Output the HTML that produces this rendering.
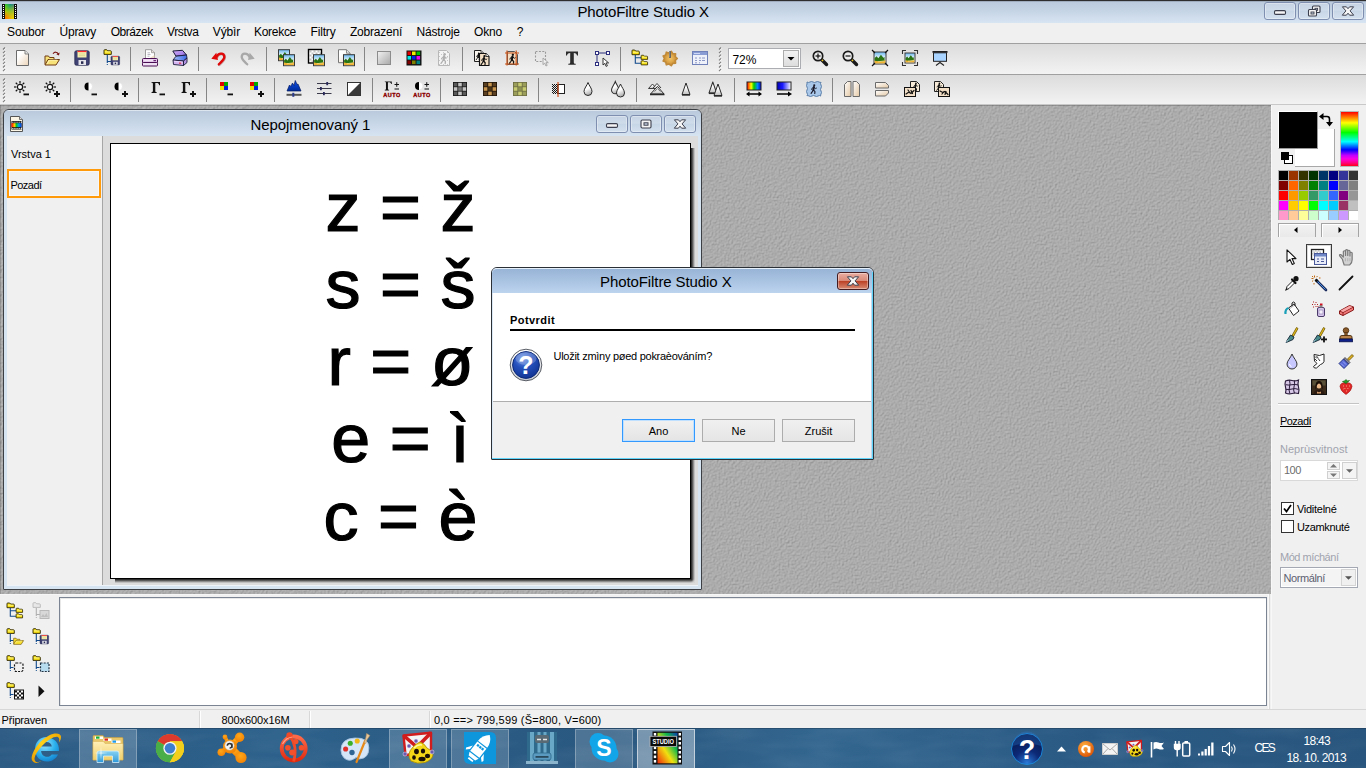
<!DOCTYPE html><html><head><meta charset="utf-8"><title>PhotoFiltre Studio X</title><style>
html,body{margin:0;padding:0}
body{width:1366px;height:768px;position:relative;overflow:hidden;background:#f0f0f0;font-family:"Liberation Sans",sans-serif;font-size:11px;color:#000}
div{position:absolute;box-sizing:border-box}
svg{position:absolute;overflow:visible}
.t{white-space:pre;line-height:1;}
.cap{border:1px solid #7f8fb0;border-radius:3px;background:linear-gradient(#c5d3e3,#cfdcea 45%,#c7d6e6 50%,#d3e0ee);box-shadow:inset 0 0 0 1px rgba(255,255,255,.35)}
.sep{width:1px;height:25px;background:#8a8a8a}
.btn{border:1px solid #acacac;background:linear-gradient(#f0f0f0,#e5e5e5);text-align:center;font-size:11px;line-height:22px}
</style></head><body>
<svg width="0" height="0" style="position:absolute"><defs>
<filter id="tex" x="0" y="0" width="100%" height="100%" color-interpolation-filters="sRGB"><feTurbulence type="fractalNoise" baseFrequency="0.55 0.55" numOctaves="2" seed="3" result="n"/><feDiffuseLighting in="n" surfaceScale="1.1" lighting-color="#fff" diffuseConstant="1"><feDistantLight azimuth="225" elevation="50"/></feDiffuseLighting><feColorMatrix type="matrix" values="0.25 0 0 0 0.483  0.25 0 0 0 0.483  0.25 0 0 0 0.483  0 0 0 1 0"/></filter>
<filter id="water" x="0" y="0" width="100%" height="100%"><feTurbulence type="fractalNoise" baseFrequency="0.012 0.05" numOctaves="3" seed="8"/><feColorMatrix type="matrix" values="0 0 0 0 1  0 0 0 0 1  0 0 0 0 1  0.9 0 0 0 -0.33"/></filter>
</defs></svg>
<div style="left:0px;top:0px;width:1366px;height:23px;background:linear-gradient(#b9c9db,#c3d2e3 40%,#d7e4f2)"></div>
<div style="left:0px;top:0px;width:1366px;height:1px;background:#2e2e2e"></div>
<div style="left:0px;top:1px;width:1366px;height:1px;background:#6c7886;opacity:.35"></div>
<div class="t" style="left:577.4px;top:4px;font-size:15px;color:#000;letter-spacing:-0.09px;">PhotoFiltre Studio X</div>
<div class="cap" style="left:1264px;top:2px;width:32px;height:18px;"><svg style="left:0;top:0" width="30" height="16" viewBox="0 0 30 16"><rect x="9.5" y="7.6" width="11" height="3.8" rx="1.2" fill="#f4f4f4" stroke="#3c3f4d" stroke-width="1.1"/></svg></div>
<div class="cap" style="left:1298px;top:2px;width:32px;height:18px;"><svg style="left:0;top:0" width="30" height="16" viewBox="0 0 30 16"><rect x="13.5" y="3" width="7.5" height="6.5" rx="1" fill="#f4f4f4" stroke="#3c3f4d" stroke-width="1.1"/><rect x="16.0" y="5.3" width="2.6" height="2" fill="#c9d6e6" stroke="#3c3f4d" stroke-width=".9"/><rect x="9.5" y="6.5" width="8" height="6.5" rx="1" fill="#f4f4f4" stroke="#3c3f4d" stroke-width="1.1"/><rect x="12.0" y="9" width="3" height="2" fill="#c9d6e6" stroke="#3c3f4d" stroke-width=".9"/></svg></div>
<div class="cap" style="left:1332px;top:2px;width:32px;height:18px;"><svg style="left:0;top:0" width="30" height="16" viewBox="0 0 30 16"><path d="M9.4 3.8h4l1.6 1.9 1.6-1.9h4l-3.5 4.1 3.6 4.3h-4.100l-1.600-2-1.600 2h-4.100l3.600-4.300z" fill="#f6f6f6" stroke="#3c3f4d" stroke-width="1" stroke-linejoin="round"/></svg></div>
<svg style="left:2px;top:3px" width="16" height="16" viewBox="0 0 16 16"><defs><linearGradient id="apg" x1="0" y1="0" x2="0" y2="1"><stop offset="0" stop-color="#3fd01a"/><stop offset=".5" stop-color="#b9c80a"/><stop offset="1" stop-color="#ff5a00"/></linearGradient><linearGradient id="apb" x1="1" y1="0" x2=".2" y2=".7"><stop offset="0" stop-color="#0058b0"/><stop offset=".45" stop-color="#1a9a7a" stop-opacity=".7"/><stop offset="1" stop-color="#3fd01a" stop-opacity="0"/></linearGradient><linearGradient id="apy" x1="1" y1="1" x2=".3" y2=".4"><stop offset="0" stop-color="#f5d800"/><stop offset="1" stop-color="#f5d800" stop-opacity="0"/></linearGradient></defs><rect x="0" y="1" width="15" height="15" fill="#111"/><rect x="3" y="1" width="9" height="15" fill="url(#apg)"/><rect x="3" y="1" width="9" height="15" fill="url(#apb)"/><rect x="3" y="1" width="9" height="15" fill="url(#apy)"/><rect x="1" y="2" width="1" height="1" fill="#fff"/><rect x="13" y="2" width="1" height="1" fill="#fff"/><rect x="1" y="4" width="1" height="1" fill="#fff"/><rect x="13" y="4" width="1" height="1" fill="#fff"/><rect x="1" y="6" width="1" height="1" fill="#fff"/><rect x="13" y="6" width="1" height="1" fill="#fff"/><rect x="1" y="8" width="1" height="1" fill="#fff"/><rect x="13" y="8" width="1" height="1" fill="#fff"/><rect x="1" y="10" width="1" height="1" fill="#fff"/><rect x="13" y="10" width="1" height="1" fill="#fff"/><rect x="1" y="12" width="1" height="1" fill="#fff"/><rect x="13" y="12" width="1" height="1" fill="#fff"/><rect x="1" y="14" width="1" height="1" fill="#fff"/><rect x="13" y="14" width="1" height="1" fill="#fff"/></svg>
<div style="left:0px;top:23px;width:1366px;height:20px;background:#f0f0f0"></div>
<div class="t" style="left:7px;top:26px;font-size:12px;color:#000;letter-spacing:-0.117px;">Soubor</div>
<div class="t" style="left:59.6px;top:26px;font-size:12px;color:#000;letter-spacing:-0.269px;">Úpravy</div>
<div class="t" style="left:110.7px;top:26px;font-size:12px;color:#000;letter-spacing:-0.48px;">Obrázek</div>
<div class="t" style="left:167px;top:26px;font-size:12px;color:#000;letter-spacing:-0.344px;">Vrstva</div>
<div class="t" style="left:212.8px;top:26px;font-size:12px;color:#000;letter-spacing:-0.163px;">Výbìr</div>
<div class="t" style="left:254px;top:26px;font-size:12px;color:#000;letter-spacing:-0.29px;">Korekce</div>
<div class="t" style="left:310.5px;top:26px;font-size:12px;color:#000;letter-spacing:-0.167px;">Filtry</div>
<div class="t" style="left:350px;top:26px;font-size:12px;color:#000;letter-spacing:-0.226px;">Zobrazení</div>
<div class="t" style="left:416.6px;top:26px;font-size:12px;color:#000;letter-spacing:-0.198px;">Nástroje</div>
<div class="t" style="left:474px;top:26px;font-size:12px;color:#000;letter-spacing:-0.172px;">Okno</div>
<div class="t" style="left:516.8px;top:26px;font-size:12px;color:#000;">?</div>
<div style="left:0px;top:43px;width:1366px;height:1px;background:#a0a0a0"></div>
<div style="left:0px;top:44px;width:1366px;height:30px;background:linear-gradient(#dcdcdc,#f3f3f3)"></div>
<div style="left:0px;top:74px;width:1366px;height:1px;background:#a0a0a0"></div>
<div style="left:0px;top:75px;width:1366px;height:30px;background:linear-gradient(#dcdcdc,#f3f3f3)"></div>
<div style="left:0px;top:104px;width:1366px;height:1px;background:#c8c8c8"></div>
<svg style="left:3px;top:47px" width="3" height="25" viewBox="0 0 3 25"><path d="M0 2.5L2 0.5" stroke="#7a7a7a" stroke-width="1.1"/><path d="M1 3.2L3 1.2" stroke="#fff" stroke-width=".7"/><path d="M0 6.1L2 4.1" stroke="#7a7a7a" stroke-width="1.1"/><path d="M1 6.800000000000001L3 4.8" stroke="#fff" stroke-width=".7"/><path d="M0 9.7L2 7.7" stroke="#7a7a7a" stroke-width="1.1"/><path d="M1 10.4L3 8.4" stroke="#fff" stroke-width=".7"/><path d="M0 13.3L2 11.3" stroke="#7a7a7a" stroke-width="1.1"/><path d="M1 14.0L3 12.0" stroke="#fff" stroke-width=".7"/><path d="M0 16.9L2 14.9" stroke="#7a7a7a" stroke-width="1.1"/><path d="M1 17.6L3 15.6" stroke="#fff" stroke-width=".7"/><path d="M0 20.5L2 18.5" stroke="#7a7a7a" stroke-width="1.1"/><path d="M1 21.2L3 19.2" stroke="#fff" stroke-width=".7"/><path d="M0 24.1L2 22.1" stroke="#7a7a7a" stroke-width="1.1"/><path d="M1 24.8L3 22.8" stroke="#fff" stroke-width=".7"/></svg>
<svg style="left:3px;top:78px" width="3" height="25" viewBox="0 0 3 25"><path d="M0 2.5L2 0.5" stroke="#7a7a7a" stroke-width="1.1"/><path d="M1 3.2L3 1.2" stroke="#fff" stroke-width=".7"/><path d="M0 6.1L2 4.1" stroke="#7a7a7a" stroke-width="1.1"/><path d="M1 6.800000000000001L3 4.8" stroke="#fff" stroke-width=".7"/><path d="M0 9.7L2 7.7" stroke="#7a7a7a" stroke-width="1.1"/><path d="M1 10.4L3 8.4" stroke="#fff" stroke-width=".7"/><path d="M0 13.3L2 11.3" stroke="#7a7a7a" stroke-width="1.1"/><path d="M1 14.0L3 12.0" stroke="#fff" stroke-width=".7"/><path d="M0 16.9L2 14.9" stroke="#7a7a7a" stroke-width="1.1"/><path d="M1 17.6L3 15.6" stroke="#fff" stroke-width=".7"/><path d="M0 20.5L2 18.5" stroke="#7a7a7a" stroke-width="1.1"/><path d="M1 21.2L3 19.2" stroke="#fff" stroke-width=".7"/><path d="M0 24.1L2 22.1" stroke="#7a7a7a" stroke-width="1.1"/><path d="M1 24.8L3 22.8" stroke="#fff" stroke-width=".7"/></svg>
<svg style="left:719px;top:47px" width="3" height="25" viewBox="0 0 3 25"><path d="M0 2.5L2 0.5" stroke="#7a7a7a" stroke-width="1.1"/><path d="M1 3.2L3 1.2" stroke="#fff" stroke-width=".7"/><path d="M0 6.1L2 4.1" stroke="#7a7a7a" stroke-width="1.1"/><path d="M1 6.800000000000001L3 4.8" stroke="#fff" stroke-width=".7"/><path d="M0 9.7L2 7.7" stroke="#7a7a7a" stroke-width="1.1"/><path d="M1 10.4L3 8.4" stroke="#fff" stroke-width=".7"/><path d="M0 13.3L2 11.3" stroke="#7a7a7a" stroke-width="1.1"/><path d="M1 14.0L3 12.0" stroke="#fff" stroke-width=".7"/><path d="M0 16.9L2 14.9" stroke="#7a7a7a" stroke-width="1.1"/><path d="M1 17.6L3 15.6" stroke="#fff" stroke-width=".7"/><path d="M0 20.5L2 18.5" stroke="#7a7a7a" stroke-width="1.1"/><path d="M1 21.2L3 19.2" stroke="#fff" stroke-width=".7"/><path d="M0 24.1L2 22.1" stroke="#7a7a7a" stroke-width="1.1"/><path d="M1 24.8L3 22.8" stroke="#fff" stroke-width=".7"/></svg>
<svg style="left:14px;top:50px" width="16" height="16" viewBox="0 0 16 16"><defs><linearGradient id="g1" x1="0" y1="0" x2="1" y2="1"><stop offset="0.3" stop-color="#fff"/><stop offset="1" stop-color="#ecd4b8"/></linearGradient></defs><path d="M2.5 0.5h8.5l3.5 3.5v11.5h-12z" fill="url(#g1)" stroke="#6b6b6b" stroke-width="1"/><path d="M11.0 0.5v3.5h3.5" fill="#e8e8e8" stroke="#6b6b6b" stroke-width=".8"/></svg>
<svg style="left:44px;top:50px" width="16" height="16" viewBox="0 0 16 16"><g transform="translate(0 0.5) scale(1)"><path d="M1 14V5.5h3.5l1 1.5H10v2" fill="#f7e27a" stroke="#6e3b12" stroke-width="1" stroke-linejoin="round"/><path d="M1 14.5l3-5.5h11.5l-3.5 5.5z" fill="#f7e27a" stroke="#6e3b12" stroke-width="1" stroke-linejoin="round"/><path d="M3 13.5l2.3-3.8h8" fill="none" stroke="#fff6c0" stroke-width=".8"/></g><path d="M9 3.8c1.5-2.2 4.2-2.2 5.3.2" fill="none" stroke="#7a1414" stroke-width="1.1"/><path d="M15.6 2.5l-.6 3.1-2.6-1.3z" fill="#7a1414"/></svg>
<svg style="left:74px;top:50px" width="16" height="16" viewBox="0 0 16 16"><g transform="translate(0 0) scale(1)"><rect x=".8" y=".8" width="14.4" height="14.4" rx="1.5" fill="#3f4273" stroke="#2a2c50" stroke-width=".8"/><rect x="3.5" y="1" width="9" height="6.5" fill="#f4efb0"/><rect x="3.5" y=".8" width="9" height="1.3" fill="#ff2a2a"/><path d="M5 4h6M5 5.6h6" stroke="#d8d28a" stroke-width=".7"/><rect x="4.5" y="10" width="7.5" height="5" fill="#e4e4ea"/><rect x="7" y="11.3" width="2.4" height="2.6" fill="#26284d"/></g></svg>
<svg style="left:104px;top:50px" width="16" height="16" viewBox="0 0 16 16"><path d="M3.300 5v8M3.300 11.500H7" stroke="#114a8c" stroke-width="1.100" fill="none"/><rect x="2.800" y="14" width="1" height="1" fill="#114a8c"/><g transform="translate(-0.5 -0.8) scale(1)"><path d="M.5 5.200V1.300Q.5 .5 1.300 .5H3.200l1 1.100H7Q7.800 1.600 7.800 2.400V5.200z" fill="#f8e010" stroke="#2a2200" stroke-width=".9" stroke-linejoin="round"/><path d="M1.400 2.700H7" stroke="#fffcb0" stroke-width=".8"/></g><g transform="translate(6.5 5.8) scale(0.6)"><rect x=".8" y=".8" width="14.4" height="14.4" rx="1.5" fill="#3f4273" stroke="#2a2c50" stroke-width=".8"/><rect x="3.5" y="1" width="9" height="6.5" fill="#f4efb0"/><rect x="3.5" y=".8" width="9" height="1.3" fill="#ff2a2a"/><path d="M5 4h6M5 5.6h6" stroke="#d8d28a" stroke-width=".7"/><rect x="4.5" y="10" width="7.5" height="5" fill="#e4e4ea"/><rect x="7" y="11.3" width="2.4" height="2.6" fill="#26284d"/></g></svg>
<div style="left:130px;top:47px;width:1px;height:24px;background:#858585"></div>
<svg style="left:142px;top:50px" width="16" height="16" viewBox="0 0 16 16"><path d="M3.500 9V-.3h6l3 3V9z" fill="#fff" stroke="#888" stroke-width=".8"/><path d="M9.500 -.3v3h3" fill="#e8e0d8" stroke="#888" stroke-width=".7"/><path d="M5.500 2.800h2.500M5.500 4.500h3M5.500 6.200h2" stroke="#9a9aa8" stroke-width=".7"/><path d="M7 8.500L12.500 5v3.500z" fill="#e8d4b8" opacity=".8"/><rect x=".5" y="8.500" width="15" height="4.500" rx="1" fill="#e4c8ea" stroke="#4a0e52" stroke-width="1"/><rect x=".5" y="12.500" width="15" height="3.500" rx=".8" fill="#f0e0f4" stroke="#4a0e52" stroke-width="1"/><path d="M2 10.200h9" stroke="#fff" stroke-width=".9" opacity=".8"/><rect x="11.500" y="10" width="2.500" height="1.200" fill="#6a2a7a"/></svg>
<svg style="left:172px;top:50px" width="16" height="16" viewBox="0 0 16 16"><defs><linearGradient id="g2" x1="0" y1="0" x2="1" y2="1"><stop offset="0" stop-color="#d8b0f8"/><stop offset="1" stop-color="#8a68e0"/></linearGradient><linearGradient id="g3" x1="0" y1="0" x2="1" y2="0"><stop offset="0" stop-color="#a8c0f8"/><stop offset="1" stop-color="#3a68e8"/></linearGradient></defs><path d="M.8 1L10.500 .3 14.500 5 4 6.200z" fill="url(#g2)" stroke="#1a1a3a" stroke-width="1" stroke-linejoin="round"/><path d="M4 6.200L14.500 5 15 8 11.500 11 1 10z" fill="url(#g3)" stroke="#1a1a3a" stroke-width=".9" stroke-linejoin="round"/><path d="M1 10L11.500 11v4.500L1.500 14.500z" fill="#d4b4f0" stroke="#1a1a3a" stroke-width=".9" stroke-linejoin="round"/><path d="M11.500 11L15 8v4.500L11.500 15.500z" fill="#b090e0" stroke="#1a1a3a" stroke-width=".9" stroke-linejoin="round"/><rect x="7" y="12.400" width="2.200" height="1.200" fill="#e01020"/><path d="M2 11.300l8.500.9" stroke="#f0e0ff" stroke-width=".8"/></svg>
<div style="left:198px;top:47px;width:1px;height:24px;background:#858585"></div>
<svg style="left:210px;top:50px" width="16" height="16" viewBox="0 0 16 16"><path d="M6.500 6.800C8.500 2.300 14.300 2.600 14.300 7 14.300 9.500 11 12 8.800 14.300" fill="none" stroke="#7a0000" stroke-width="2.600" stroke-linecap="round" opacity=".35" transform="translate(.5 .5)"/><path d="M6.500 6.800C8.500 2.300 14.300 2.600 14.300 7 14.300 9.500 11 12 8.800 14.300" fill="none" stroke="#e00808" stroke-width="2.300" stroke-linecap="round"/><path d="M1.300 8.800L6.300 2.800 8 10z" fill="#e00808"/></svg>
<svg style="left:240px;top:50px" width="16" height="16" viewBox="0 0 16 16"><g transform="translate(16 0) scale(-1 1)"><path d="M6.500 6.800C8.500 2.300 14.300 2.600 14.300 7 14.300 9.500 11 12 8.800 14.300" fill="none" stroke="#a8a8a8" stroke-width="2.300" stroke-linecap="round"/><path d="M1.300 8.800L6.300 2.800 8 10z" fill="#a8a8a8"/></g></svg>
<div style="left:266px;top:47px;width:1px;height:24px;background:#858585"></div>
<svg style="left:278px;top:50px" width="16" height="16" viewBox="0 0 16 16"><g transform="translate(0.5 -0.3)"><defs><linearGradient id="g4" x1="0" y1="0" x2="0" y2="1"><stop offset="0" stop-color="#6ab8f0"/><stop offset=".5" stop-color="#e8f4fc"/></linearGradient></defs><rect x="0" y="0" width="11" height="11" fill="url(#g4)" stroke="#3a3a3a" stroke-width="1"/><rect x=".6" y="7.260000000000001" width="9.8" height="3.14" fill="#f0b030"/><path d="M.6 7.92L.6 5.5 2.42 3.96l1.54 1.76 2.42-3.3 2.2 2.8600000000000003 1.1-0.6599999999999999V8.14L5.5 8.8z" fill="#2a7414"/><path d="M3.3 9.02l6.6-0.88" stroke="#fbe08a" stroke-width=".8"/></g><g transform="translate(5.5 4.7)"><defs><linearGradient id="g5" x1="0" y1="0" x2="0" y2="1"><stop offset="0" stop-color="#6ab8f0"/><stop offset=".5" stop-color="#e8f4fc"/></linearGradient></defs><rect x="0" y="0" width="11" height="11" fill="url(#g5)" stroke="#3a3a3a" stroke-width="1"/><rect x=".6" y="7.260000000000001" width="9.8" height="3.14" fill="#f0b030"/><path d="M.6 7.92L.6 5.5 2.42 3.96l1.54 1.76 2.42-3.3 2.2 2.8600000000000003 1.1-0.6599999999999999V8.14L5.5 8.8z" fill="#2a7414"/><path d="M3.3 9.02l6.6-0.88" stroke="#fbe08a" stroke-width=".8"/></g></svg>
<svg style="left:308px;top:50px" width="16" height="16" viewBox="0 0 16 16"><rect x=".5" y="-.5" width="13" height="13.500" fill="#fff"/><rect x="1.5" y="0.5" width="2" height="2" fill="#c4c4c4"/><rect x="5.5" y="0.5" width="2" height="2" fill="#c4c4c4"/><rect x="9.5" y="0.5" width="2" height="2" fill="#c4c4c4"/><rect x="3.5" y="2.5" width="2" height="2" fill="#c4c4c4"/><rect x="7.5" y="2.5" width="2" height="2" fill="#c4c4c4"/><rect x="11.5" y="2.5" width="2" height="2" fill="#c4c4c4"/><rect x="1.5" y="4.5" width="2" height="2" fill="#c4c4c4"/><rect x="5.5" y="4.5" width="2" height="2" fill="#c4c4c4"/><rect x="9.5" y="4.5" width="2" height="2" fill="#c4c4c4"/><rect x="3.5" y="6.5" width="2" height="2" fill="#c4c4c4"/><rect x="7.5" y="6.5" width="2" height="2" fill="#c4c4c4"/><rect x="11.5" y="6.5" width="2" height="2" fill="#c4c4c4"/><rect x="1.5" y="8.5" width="2" height="2" fill="#c4c4c4"/><rect x="5.5" y="8.5" width="2" height="2" fill="#c4c4c4"/><rect x="9.5" y="8.5" width="2" height="2" fill="#c4c4c4"/><rect x="3.5" y="10.5" width="2" height="2" fill="#c4c4c4"/><rect x="7.5" y="10.5" width="2" height="2" fill="#c4c4c4"/><rect x="11.5" y="10.5" width="2" height="2" fill="#c4c4c4"/><rect x=".5" y="-.5" width="13" height="13.500" fill="none" stroke="#000" stroke-width="1.400"/><g transform="translate(5.5 4.7)"><defs><linearGradient id="g6" x1="0" y1="0" x2="0" y2="1"><stop offset="0" stop-color="#6ab8f0"/><stop offset=".5" stop-color="#e8f4fc"/></linearGradient></defs><rect x="0" y="0" width="11" height="11" fill="url(#g6)" stroke="#3a3a3a" stroke-width="1"/><rect x=".6" y="7.260000000000001" width="9.8" height="3.14" fill="#f0b030"/><path d="M.6 7.92L.6 5.5 2.42 3.96l1.54 1.76 2.42-3.3 2.2 2.8600000000000003 1.1-0.6599999999999999V8.14L5.5 8.8z" fill="#2a7414"/><path d="M3.3 9.02l6.6-0.88" stroke="#fbe08a" stroke-width=".8"/></g></svg>
<svg style="left:338px;top:50px" width="16" height="16" viewBox="0 0 16 16"><defs><linearGradient id="g7" x1="0" y1="0" x2="1" y2="1"><stop offset="0.3" stop-color="#fff"/><stop offset="1" stop-color="#ecd4b8"/></linearGradient></defs><path d="M0.5 -0.3h8.0l3.5 3.5v9.5h-11.5z" fill="url(#g7)" stroke="#777" stroke-width="1"/><path d="M8.5 -0.3v3.5h3.5" fill="#e8e8e8" stroke="#777" stroke-width=".8"/><g transform="translate(5.5 4.7)"><defs><linearGradient id="g8" x1="0" y1="0" x2="0" y2="1"><stop offset="0" stop-color="#6ab8f0"/><stop offset=".5" stop-color="#e8f4fc"/></linearGradient></defs><rect x="0" y="0" width="11" height="11" fill="url(#g8)" stroke="#3a3a3a" stroke-width="1"/><rect x=".6" y="7.260000000000001" width="9.8" height="3.14" fill="#f0b030"/><path d="M.6 7.92L.6 5.5 2.42 3.96l1.54 1.76 2.42-3.3 2.2 2.8600000000000003 1.1-0.6599999999999999V8.14L5.5 8.8z" fill="#2a7414"/><path d="M3.3 9.02l6.6-0.88" stroke="#fbe08a" stroke-width=".8"/></g></svg>
<div style="left:364px;top:47px;width:1px;height:24px;background:#858585"></div>
<svg style="left:376px;top:50px" width="16" height="16" viewBox="0 0 16 16"><defs><linearGradient id="g9" x1="0" y1="0" x2="1" y2="1"><stop offset="0" stop-color="#f2f2f2"/><stop offset="1" stop-color="#a8a8a8"/></linearGradient></defs><rect x="1.5" y="1.5" width="13" height="13" fill="url(#g9)" stroke="#8c8c8c" stroke-width="1"/></svg>
<svg style="left:406px;top:50px" width="16" height="16" viewBox="0 0 16 16"><rect x=".5" y=".5" width="15" height="15" fill="#111"/><rect x="1.5" y="1.5" width="3.6" height="3.6" fill="#e00000"/><rect x="6.0" y="1.5" width="3.6" height="3.6" fill="#f0f000"/><rect x="10.5" y="1.5" width="3.6" height="3.6" fill="#00c000"/><rect x="1.5" y="6.0" width="3.6" height="3.6" fill="#00e8e8"/><rect x="6.0" y="6.0" width="3.6" height="3.6" fill="#0020f0"/><rect x="10.5" y="6.0" width="3.6" height="3.6" fill="#f000f0"/><rect x="1.5" y="10.5" width="3.6" height="3.6" fill="#800000"/><rect x="6.0" y="10.5" width="3.6" height="3.6" fill="#808000"/><rect x="10.5" y="10.5" width="3.6" height="3.6" fill="#008080"/></svg>
<svg style="left:436px;top:50px" width="16" height="16" viewBox="0 0 16 16"><path d="M2.5.5h8l3 3v12h-11z" fill="#f4f4f4" stroke="#b8b8b8" stroke-width="1"/><rect x="3" y="2" width="1" height="1" fill="#c8c8c8"/><rect x="7" y="2" width="1" height="1" fill="#c8c8c8"/><rect x="11" y="2" width="1" height="1" fill="#c8c8c8"/><rect x="5" y="4" width="1" height="1" fill="#c8c8c8"/><rect x="9" y="4" width="1" height="1" fill="#c8c8c8"/><rect x="3" y="6" width="1" height="1" fill="#c8c8c8"/><rect x="7" y="6" width="1" height="1" fill="#c8c8c8"/><rect x="11" y="6" width="1" height="1" fill="#c8c8c8"/><rect x="5" y="8" width="1" height="1" fill="#c8c8c8"/><rect x="9" y="8" width="1" height="1" fill="#c8c8c8"/><rect x="3" y="10" width="1" height="1" fill="#c8c8c8"/><rect x="7" y="10" width="1" height="1" fill="#c8c8c8"/><rect x="11" y="10" width="1" height="1" fill="#c8c8c8"/><rect x="5" y="12" width="1" height="1" fill="#c8c8c8"/><rect x="9" y="12" width="1" height="1" fill="#c8c8c8"/><rect x="3" y="14" width="1" height="1" fill="#c8c8c8"/><rect x="7" y="14" width="1" height="1" fill="#c8c8c8"/><rect x="11" y="14" width="1" height="1" fill="#c8c8c8"/><g transform="translate(4 3) scale(1)" fill="none" stroke="#b0b0b0" stroke-linecap="round" stroke-linejoin="round"><circle cx="4.6" cy="1.3" r="1.2" fill="#b0b0b0" stroke="none"/><path d="M4.2 3.2L3.6 6.5" stroke-width="2.2"/><path d="M3.6 6.5L5.4 8.4 5.2 10.6M3.6 6.5L2.4 8.4 1 10.4" stroke-width="1.3"/><path d="M4.3 3.6L6.4 5l.8-.6M3.8 3.6L2 4.6 1.6 6" stroke-width="1"/></g></svg>
<div style="left:462px;top:47px;width:1px;height:24px;background:#858585"></div>
<svg style="left:474px;top:50px" width="16" height="16" viewBox="0 0 16 16"><path d="M0.5 0.5h6.5l2.5 2.5v8.5h-9z" fill="#fbf7f0" stroke="#222" stroke-width="1"/><path d="M7.0 0.5v2.5h2.5" fill="#e8e8e8" stroke="#222" stroke-width=".8"/><g transform="translate(1.5 2.5) scale(0.7)" fill="none" stroke="#111" stroke-linecap="round" stroke-linejoin="round"><circle cx="4.6" cy="1.3" r="1.2" fill="#111" stroke="none"/><path d="M4.2 3.2L3.6 6.5" stroke-width="2.2"/><path d="M3.6 6.5L5.4 8.4 5.2 10.6M3.6 6.5L2.4 8.4 1 10.4" stroke-width="1.3"/><path d="M4.3 3.6L6.4 5l.8-.6M3.8 3.6L2 4.6 1.6 6" stroke-width="1"/></g><path d="M5.5 3.5h6.5l3 3v9h-9.5z" fill="#f3dfc6" stroke="#111" stroke-width="1.1"/><path d="M12 3.5v3h3" fill="#fff" stroke="#111" stroke-width=".8"/><g transform="translate(6.2 5) scale(0.92)" fill="none" stroke="#111" stroke-linecap="round" stroke-linejoin="round"><circle cx="4.6" cy="1.3" r="1.2" fill="#111" stroke="none"/><path d="M4.2 3.2L3.6 6.5" stroke-width="2.2"/><path d="M3.6 6.5L5.4 8.4 5.2 10.6M3.6 6.5L2.4 8.4 1 10.4" stroke-width="1.3"/><path d="M4.3 3.6L6.4 5l.8-.6M3.8 3.6L2 4.6 1.6 6" stroke-width="1"/></g></svg>
<svg style="left:504px;top:50px" width="16" height="16" viewBox="0 0 16 16"><path d="M3.5 1.5h7l3 3v10h-10z" fill="#f3dfc6" stroke="#555" stroke-width="1"/><g transform="translate(4.5 3.5) scale(0.95)" fill="none" stroke="#111" stroke-linecap="round" stroke-linejoin="round"><circle cx="4.6" cy="1.3" r="1.2" fill="#111" stroke="none"/><path d="M4.2 3.2L3.6 6.5" stroke-width="2.2"/><path d="M3.6 6.5L5.4 8.4 5.2 10.6M3.6 6.5L2.4 8.4 1 10.4" stroke-width="1.3"/><path d="M4.3 3.6L6.4 5l.8-.6M3.8 3.6L2 4.6 1.6 6" stroke-width="1"/></g><path d="M3 .5v15M12.2 .5v15M1 3h14M1 14h14" stroke="#c8541a" stroke-width="1.2" fill="none"/></svg>
<svg style="left:534px;top:50px" width="16" height="16" viewBox="0 0 16 16"><rect x="1.5" y="1.5" width="10" height="10" fill="none" stroke="#9a9a9a" stroke-width="1.1" stroke-dasharray="2 1.4"/><path transform="translate(9 8) scale(0.95)" d="M0 0l0 7 1.8-1.6 1.3 3 1.3-.6-1.3-2.9H5.6z" fill="#f0f0f0" stroke="#a0a0a0" stroke-width="0.9473684210526316" stroke-linejoin="round"/></svg>
<svg style="left:564px;top:50px" width="16" height="16" viewBox="0 0 16 16"><path d="M2 1.5h12v4h-1c-.3-1.8-1-2.6-3.2-2.6v9.3c0 1.2.5 1.5 1.9 1.6v1H4.3v-1c1.4-.1 1.9-.4 1.9-1.6V2.9C4 2.9 3.300 3.700 3 5.500H2z" fill="#2b2b2b"/></svg>
<svg style="left:594px;top:50px" width="16" height="16" viewBox="0 0 16 16"><path d="M3 3h11M3 3v11" stroke="#2d2f7e" stroke-width="1" fill="none"/><rect x="1.5" y="1.500" width="3" height="3" fill="#fff" stroke="#2d2f7e" stroke-width="1"/><rect x="12.5" y="1.5" width="3" height="3" fill="#fff" stroke="#2d2f7e" stroke-width="1"/><rect x="1.5" y="12.5" width="3" height="3" fill="#fff" stroke="#2d2f7e" stroke-width="1"/><path transform="translate(9 8) scale(1)" d="M0 0l0 7 1.8-1.6 1.3 3 1.3-.6-1.3-2.9H5.6z" fill="#fff" stroke="#222" stroke-width="0.9" stroke-linejoin="round"/></svg>
<div style="left:620px;top:47px;width:1px;height:24px;background:#858585"></div>
<svg style="left:632px;top:50px" width="16" height="16" viewBox="0 0 16 16"><path d="M3.300 5v8.300h6M3.300 7.800h6" stroke="#114a8c" stroke-width="1.100" fill="none"/><g transform="translate(-0.5 -0.5) scale(1)"><path d="M.5 5.200V1.300Q.5 .5 1.300 .5H3.200l1 1.100H7Q7.800 1.600 7.800 2.400V5.200z" fill="#f8e010" stroke="#2a2200" stroke-width=".9" stroke-linejoin="round"/><path d="M1.400 2.700H7" stroke="#fffcb0" stroke-width=".8"/></g><g transform="translate(8.7 4.8) scale(0.88)"><path d="M.5 5.200V1.300Q.5 .5 1.300 .5H3.200l1 1.100H7Q7.800 1.600 7.800 2.400V5.200z" fill="#f8e010" stroke="#2a2200" stroke-width=".9" stroke-linejoin="round"/><path d="M1.400 2.700H7" stroke="#fffcb0" stroke-width=".8"/></g><g transform="translate(8.7 10.3) scale(0.88)"><path d="M.5 5.200V1.300Q.5 .5 1.300 .5H3.200l1 1.100H7Q7.800 1.600 7.800 2.400V5.200z" fill="#f8e010" stroke="#2a2200" stroke-width=".9" stroke-linejoin="round"/><path d="M1.400 2.700H7" stroke="#fffcb0" stroke-width=".8"/></g></svg>
<svg style="left:662px;top:50px" width="16" height="16" viewBox="0 0 16 16"><defs><radialGradient id="g11"><stop offset="0" stop-color="#f3c56a"/><stop offset="1" stop-color="#c98a2a"/></radialGradient></defs><polygon points="15.30,8.50 13.26,10.42 13.59,13.19 10.80,13.35 9.27,15.69 7.03,14.01 4.35,14.82 3.71,12.10 1.14,11.00 2.40,8.50 1.14,6.00 3.71,4.90 4.35,2.18 7.03,2.99 9.27,1.31 10.80,3.65 13.59,3.81 13.26,6.58" fill="url(#g11)" stroke="#c08a3a" stroke-width="1.6" stroke-linejoin="round"/><rect x="7" y="1" width="2" height="7" rx=".8" fill="#555"/><rect x="7.400" y="1.200" width=".8" height="6" fill="#aaa"/></svg>
<svg style="left:692px;top:50px" width="16" height="16" viewBox="0 0 16 16"><rect x=".5" y="1.500" width="15" height="13" fill="#eef1fa" stroke="#7080b8" stroke-width="1"/><rect x="1" y="2" width="14" height="3" fill="#8a9cd4"/><path d="M2 3.500h6" stroke="#dfe6ff" stroke-width=".8"/><path d="M3 8h2M7 8h2M10 8h3M3 10.500h2M7 10.500h2M10 10.500h3M3 12.800h2M7 12.800h1" stroke="#8a96c4" stroke-width="1"/></svg>
<svg style="left:14px;top:81px" width="16" height="16" viewBox="0 0 16 16"><circle cx="6" cy="6" r="2.600" fill="#fff" stroke="#111" stroke-width="1.200"/><path d="M9.60 6.00L12.00 6.00" stroke="#111" stroke-width="1.200"/><path d="M8.55 8.55L10.24 10.24" stroke="#111" stroke-width="1.200"/><path d="M6.00 9.60L6.00 12.00" stroke="#111" stroke-width="1.200"/><path d="M3.45 8.55L1.76 10.24" stroke="#111" stroke-width="1.200"/><path d="M2.40 6.00L0.00 6.00" stroke="#111" stroke-width="1.200"/><path d="M3.45 3.45L1.76 1.76" stroke="#111" stroke-width="1.200"/><path d="M6.00 2.40L6.00 0.00" stroke="#111" stroke-width="1.200"/><path d="M8.55 3.45L10.24 1.76" stroke="#111" stroke-width="1.200"/><rect x="9.500" y="12.500" width="5.500" height="1.800" fill="#111"/></svg>
<svg style="left:44px;top:81px" width="16" height="16" viewBox="0 0 16 16"><circle cx="6" cy="6" r="2.600" fill="#fff" stroke="#111" stroke-width="1.200"/><path d="M9.60 6.00L12.00 6.00" stroke="#111" stroke-width="1.200"/><path d="M8.55 8.55L10.24 10.24" stroke="#111" stroke-width="1.200"/><path d="M6.00 9.60L6.00 12.00" stroke="#111" stroke-width="1.200"/><path d="M3.45 8.55L1.76 10.24" stroke="#111" stroke-width="1.200"/><path d="M2.40 6.00L0.00 6.00" stroke="#111" stroke-width="1.200"/><path d="M3.45 3.45L1.76 1.76" stroke="#111" stroke-width="1.200"/><path d="M6.00 2.40L6.00 0.00" stroke="#111" stroke-width="1.200"/><path d="M8.55 3.45L10.24 1.76" stroke="#111" stroke-width="1.200"/><rect x="10" y="12" width="6" height="2" fill="#111"/><rect x="12" y="10" width="2" height="6" fill="#111"/></svg>
<div style="left:70px;top:78px;width:1px;height:24px;background:#858585"></div>
<svg style="left:82px;top:81px" width="16" height="16" viewBox="0 0 16 16"><circle cx="6.5" cy="5.5" r="4" fill="#fff" stroke="#ddd" stroke-width=".6"/><path d="M6.5 1.5a4 4 0 0 0 0 8z" fill="#000"/><rect x="9.500" y="12.500" width="5.500" height="1.800" fill="#111"/></svg>
<svg style="left:112px;top:81px" width="16" height="16" viewBox="0 0 16 16"><circle cx="6.5" cy="5.5" r="4" fill="#fff" stroke="#ddd" stroke-width=".6"/><path d="M6.5 1.5a4 4 0 0 0 0 8z" fill="#000"/><rect x="10" y="12" width="6" height="2" fill="#111"/><rect x="12" y="10" width="2" height="6" fill="#111"/></svg>
<div style="left:138px;top:78px;width:1px;height:24px;background:#858585"></div>
<svg style="left:150px;top:81px" width="16" height="16" viewBox="0 0 16 16"><path transform="translate(1.5 1)" d="M0 0h8.500v3.200h-.8C7.400 1.600 6.800 1 5 1H3.800v8c0 .9.300 1.100 1.400 1.200v.8H0v-.8c1.100-.1 1.400-.3 1.400-1.200V2C1.400 1.100 1.100.9 0 .8z" fill="#111"/><rect x="9.500" y="12.500" width="5.500" height="1.800" fill="#111"/></svg>
<svg style="left:180px;top:81px" width="16" height="16" viewBox="0 0 16 16"><path transform="translate(1.5 1)" d="M0 0h8.500v3.200h-.8C7.400 1.600 6.800 1 5 1H3.800v8c0 .9.300 1.100 1.400 1.200v.8H0v-.8c1.100-.1 1.400-.3 1.400-1.200V2C1.400 1.100 1.100.9 0 .8z" fill="#111"/><rect x="10" y="12" width="6" height="2" fill="#111"/><rect x="12" y="10" width="2" height="6" fill="#111"/></svg>
<div style="left:206px;top:78px;width:1px;height:24px;background:#858585"></div>
<svg style="left:218px;top:81px" width="16" height="16" viewBox="0 0 16 16"><rect x="2" y="1" width="4" height="4" fill="#e00000"/><rect x="6" y="1" width="4" height="4" fill="#00a800"/><rect x="2" y="5" width="4" height="4" fill="#f0e000"/><rect x="6" y="5" width="4" height="4" fill="#0020e0"/><rect x="9.500" y="12.500" width="5.500" height="1.800" fill="#111"/></svg>
<svg style="left:248px;top:81px" width="16" height="16" viewBox="0 0 16 16"><rect x="2" y="1" width="4" height="4" fill="#e00000"/><rect x="6" y="1" width="4" height="4" fill="#00a800"/><rect x="2" y="5" width="4" height="4" fill="#f0e000"/><rect x="6" y="5" width="4" height="4" fill="#0020e0"/><rect x="10" y="12" width="6" height="2" fill="#111"/><rect x="12" y="10" width="2" height="6" fill="#111"/></svg>
<div style="left:274px;top:78px;width:1px;height:24px;background:#858585"></div>
<svg style="left:286px;top:81px" width="16" height="16" viewBox="0 0 16 16"><defs><linearGradient id="g12" x1="0" y1="0" x2="0" y2="1"><stop offset="0" stop-color="#0a50f0"/><stop offset="1" stop-color="#002a98"/></linearGradient></defs><path d="M1 10L3.500 4l1.300 1.500L6.500 2 8 4.500 9.300 -.5 11 3.500 12 3 15 10z" fill="url(#g12)" stroke="#041a60" stroke-width=".7" stroke-linejoin="round"/><path d="M.5 13.800h15" stroke="#555" stroke-width="2"/><rect x="6.300" y="11.800" width="2" height="4" fill="#2a3a8a"/></svg>
<svg style="left:316px;top:81px" width="16" height="16" viewBox="0 0 16 16"><path d="M1 2.500h14.500M1 7.500h14.500M1 12.500h14.500" stroke="#3a3a4a" stroke-width="1"/><rect x="10.300" y="1" width="1.800" height="3.200" fill="#2a2a5a"/><rect x="4" y="6" width="1.800" height="3.200" fill="#2a2a5a"/><rect x="7" y="11" width="1.800" height="3.200" fill="#2a2a5a"/></svg>
<svg style="left:346px;top:81px" width="16" height="16" viewBox="0 0 16 16"><rect x="1.500" y="1.500" width="13" height="13" fill="#fff" stroke="#333" stroke-width="1"/><path d="M14.500 1.500v13h-13z" fill="#3a3a3a"/></svg>
<div style="left:372px;top:78px;width:1px;height:24px;background:#858585"></div>
<svg style="left:384px;top:81px" width="16" height="16" viewBox="0 0 16 16"><g transform="scale(.82)"><path transform="translate(1 0.5)" d="M0 0h8.500v3.200h-.8C7.400 1.600 6.800 1 5 1H3.800v8c0 .9.300 1.100 1.400 1.200v.8H0v-.8c1.100-.1 1.400-.3 1.400-1.200V2C1.400 1.100 1.100.9 0 .8z" fill="#111"/></g><path d="M10.500 3.500h4.500M12.750 1.200v4.600M10.500 8h4.500" stroke="#111" stroke-width="1"/><text x="8" y="15.600" font-family="Liberation Sans" font-weight="700" font-size="5.500" text-anchor="middle" fill="#8a0000" stroke="#8a0000" stroke-width=".35" letter-spacing=".5">AUTO</text></svg>
<svg style="left:414px;top:81px" width="16" height="16" viewBox="0 0 16 16"><circle cx="5" cy="5" r="4" fill="#fff" stroke="#ddd" stroke-width=".6"/><path d="M5 1a4 4 0 0 0 0 8z" fill="#000"/><path d="M10.500 3.500h4.500M12.750 1.200v4.600M10.500 8h4.500" stroke="#111" stroke-width="1"/><text x="8" y="15.600" font-family="Liberation Sans" font-weight="700" font-size="5.500" text-anchor="middle" fill="#8a0000" stroke="#8a0000" stroke-width=".35" letter-spacing=".5">AUTO</text></svg>
<div style="left:440px;top:78px;width:1px;height:24px;background:#858585"></div>
<svg style="left:452px;top:81px" width="16" height="16" viewBox="0 0 16 16"><rect x="1" y="1" width="14" height="14" fill="#1a1a1a"/><rect x="1.8" y="1.8" width="3.600" height="3.600" fill="#585858"/><rect x="6.2" y="1.8" width="3.600" height="3.600" fill="#c4c4c4"/><rect x="10.6" y="1.8" width="3.600" height="3.600" fill="#585858"/><rect x="1.8" y="6.2" width="3.600" height="3.600" fill="#c4c4c4"/><rect x="6.2" y="6.2" width="3.600" height="3.600" fill="#767676"/><rect x="10.6" y="6.2" width="3.600" height="3.600" fill="#c4c4c4"/><rect x="1.8" y="10.6" width="3.600" height="3.600" fill="#585858"/><rect x="6.2" y="10.6" width="3.600" height="3.600" fill="#c4c4c4"/><rect x="10.6" y="10.6" width="3.600" height="3.600" fill="#585858"/></svg>
<svg style="left:482px;top:81px" width="16" height="16" viewBox="0 0 16 16"><rect x="1" y="1" width="14" height="14" fill="#20140a"/><rect x="1.8" y="1.8" width="3.600" height="3.600" fill="#5a4020"/><rect x="6.2" y="1.8" width="3.600" height="3.600" fill="#c8964e"/><rect x="10.6" y="1.8" width="3.600" height="3.600" fill="#5a4020"/><rect x="1.8" y="6.2" width="3.600" height="3.600" fill="#c8964e"/><rect x="6.2" y="6.2" width="3.600" height="3.600" fill="#4a3418"/><rect x="10.6" y="6.2" width="3.600" height="3.600" fill="#c8964e"/><rect x="1.8" y="10.6" width="3.600" height="3.600" fill="#5a4020"/><rect x="6.2" y="10.6" width="3.600" height="3.600" fill="#c8964e"/><rect x="10.6" y="10.6" width="3.600" height="3.600" fill="#5a4020"/></svg>
<svg style="left:512px;top:81px" width="16" height="16" viewBox="0 0 16 16"><rect x="1" y="1" width="14" height="14" fill="#6e6e44"/><rect x="1.8" y="1.8" width="3.600" height="3.600" fill="#9a9e5a"/><rect x="6.2" y="1.8" width="3.600" height="3.600" fill="#c8cc70"/><rect x="10.6" y="1.8" width="3.600" height="3.600" fill="#9a9e5a"/><rect x="1.8" y="6.2" width="3.600" height="3.600" fill="#c8cc70"/><rect x="6.2" y="6.2" width="3.600" height="3.600" fill="#8e9252"/><rect x="10.6" y="6.2" width="3.600" height="3.600" fill="#c8cc70"/><rect x="1.8" y="10.6" width="3.600" height="3.600" fill="#9a9e5a"/><rect x="6.2" y="10.6" width="3.600" height="3.600" fill="#c8cc70"/><rect x="10.6" y="10.6" width="3.600" height="3.600" fill="#9a9e5a"/></svg>
<div style="left:538px;top:78px;width:1px;height:24px;background:#858585"></div>
<svg style="left:550px;top:81px" width="16" height="16" viewBox="0 0 16 16"><rect x="2" y="3" width="6" height="10" fill="#e8e8e8"/><rect x="2" y="3" width="1" height="1" fill="#111"/><rect x="4" y="3" width="1" height="1" fill="#111"/><rect x="6" y="3" width="1" height="1" fill="#111"/><rect x="3" y="4" width="1" height="1" fill="#111"/><rect x="5" y="4" width="1" height="1" fill="#111"/><rect x="7" y="4" width="1" height="1" fill="#111"/><rect x="2" y="5" width="1" height="1" fill="#111"/><rect x="4" y="5" width="1" height="1" fill="#111"/><rect x="6" y="5" width="1" height="1" fill="#111"/><rect x="3" y="6" width="1" height="1" fill="#111"/><rect x="5" y="6" width="1" height="1" fill="#111"/><rect x="7" y="6" width="1" height="1" fill="#111"/><rect x="2" y="7" width="1" height="1" fill="#111"/><rect x="4" y="7" width="1" height="1" fill="#111"/><rect x="6" y="7" width="1" height="1" fill="#111"/><rect x="3" y="8" width="1" height="1" fill="#111"/><rect x="5" y="8" width="1" height="1" fill="#111"/><rect x="7" y="8" width="1" height="1" fill="#111"/><rect x="2" y="9" width="1" height="1" fill="#111"/><rect x="4" y="9" width="1" height="1" fill="#111"/><rect x="6" y="9" width="1" height="1" fill="#111"/><rect x="3" y="10" width="1" height="1" fill="#111"/><rect x="5" y="10" width="1" height="1" fill="#111"/><rect x="7" y="10" width="1" height="1" fill="#111"/><rect x="2" y="11" width="1" height="1" fill="#111"/><rect x="4" y="11" width="1" height="1" fill="#111"/><rect x="6" y="11" width="1" height="1" fill="#111"/><rect x="3" y="12" width="1" height="1" fill="#111"/><rect x="5" y="12" width="1" height="1" fill="#111"/><rect x="7" y="12" width="1" height="1" fill="#111"/><rect x="8" y="3.500" width="6.500" height="9" fill="#fff" stroke="#222" stroke-width="1"/><path d="M8 1v15" stroke="#c8400c" stroke-width="1.100"/></svg>
<svg style="left:580px;top:81px" width="16" height="16" viewBox="0 0 16 16"><defs><linearGradient id="g13" x1="0" y1="0" x2=".3" y2="1"><stop offset=".55" stop-color="#fff"/><stop offset="1" stop-color="#b4b4b4"/></linearGradient></defs><path transform="translate(4 1.5) scale(1)" d="M4 0C5 3 8 6 8 9a4 4 0 0 1-8 0C0 6 3 3 4 0z" fill="url(#g13)" stroke="#2a2a2a" stroke-width="1.0"/></svg>
<svg style="left:610px;top:81px" width="16" height="16" viewBox="0 0 16 16"><defs><linearGradient id="g14" x1="0" y1="0" x2=".3" y2="1"><stop offset=".55" stop-color="#fff"/><stop offset="1" stop-color="#b4b4b4"/></linearGradient></defs><path transform="translate(1.5 0.5) scale(0.95)" d="M4 0C5 3 8 6 8 9a4 4 0 0 1-8 0C0 6 3 3 4 0z" fill="url(#g14)" stroke="#2a2a2a" stroke-width="1.0526315789473684"/><defs><linearGradient id="g15" x1="0" y1="0" x2=".3" y2="1"><stop offset=".55" stop-color="#fff"/><stop offset="1" stop-color="#b4b4b4"/></linearGradient></defs><path transform="translate(6.5 3) scale(1)" d="M4 0C5 3 8 6 8 9a4 4 0 0 1-8 0C0 6 3 3 4 0z" fill="url(#g15)" stroke="#2a2a2a" stroke-width="1.0"/></svg>
<div style="left:636px;top:78px;width:1px;height:24px;background:#858585"></div>
<svg style="left:648px;top:81px" width="16" height="16" viewBox="0 0 16 16"><defs><linearGradient id="g16" x1="0" y1="0" x2="0" y2="1"><stop offset=".3" stop-color="#fff"/><stop offset="1" stop-color="#c4c4c4"/></linearGradient></defs><path d="M.5 7.500L4.500 3l4 4.500z" fill="url(#g16)" stroke="#2a2a2a" stroke-width=".9" stroke-linejoin="round"/><path d="M5 7L9 2.500l4 4.500" fill="url(#g16)" stroke="#2a2a2a" stroke-width=".9" stroke-linejoin="round"/><path d="M2.500 13L9.500 5.500 16 13z" fill="url(#g16)" stroke="#2a2a2a" stroke-width="1" stroke-linejoin="round"/><path d="M6.500 10.500l3-2.800 3 2.800" fill="none" stroke="#555" stroke-width=".8"/><path d="M2 13.500h14.500" stroke="#2a2a2a" stroke-width="1.500"/></svg>
<svg style="left:678px;top:81px" width="16" height="16" viewBox="0 0 16 16"><defs><linearGradient id="g17" x1="0" y1="0" x2="0" y2="1"><stop offset=".4" stop-color="#fff"/><stop offset="1" stop-color="#bdbdbd"/></linearGradient></defs><path transform="translate(4 2) scale(1)" d="M4 0L8 11.500H0z" fill="url(#g17)" stroke="#2a2a2a" stroke-width="1.0" stroke-linejoin="round"/><path transform="translate(4 2) scale(1)" d="M0 12h8" stroke="#2a2a2a" stroke-width="1.4"/></svg>
<svg style="left:708px;top:81px" width="16" height="16" viewBox="0 0 16 16"><defs><linearGradient id="g18" x1="0" y1="0" x2="0" y2="1"><stop offset=".4" stop-color="#fff"/><stop offset="1" stop-color="#bdbdbd"/></linearGradient></defs><path transform="translate(1 1) scale(0.95)" d="M4 0L8 11.500H0z" fill="url(#g18)" stroke="#2a2a2a" stroke-width="1.0526315789473684" stroke-linejoin="round"/><path transform="translate(1 1) scale(0.95)" d="M0 12h8" stroke="#2a2a2a" stroke-width="1.4736842105263157"/><defs><linearGradient id="g19" x1="0" y1="0" x2="0" y2="1"><stop offset=".4" stop-color="#fff"/><stop offset="1" stop-color="#bdbdbd"/></linearGradient></defs><path transform="translate(6 3) scale(1)" d="M4 0L8 11.500H0z" fill="url(#g19)" stroke="#2a2a2a" stroke-width="1.0" stroke-linejoin="round"/><path transform="translate(6 3) scale(1)" d="M0 12h8" stroke="#2a2a2a" stroke-width="1.4"/></svg>
<div style="left:734px;top:78px;width:1px;height:24px;background:#858585"></div>
<svg style="left:746px;top:81px" width="16" height="16" viewBox="0 0 16 16"><defs><linearGradient id="g20"><stop offset="0" stop-color="#f00"/><stop offset=".3" stop-color="#ff0"/><stop offset=".5" stop-color="#0c0"/><stop offset=".75" stop-color="#08f"/><stop offset="1" stop-color="#00c"/></linearGradient></defs><rect x="1" y="1" width="14" height="8" fill="url(#g20)" stroke="#222" stroke-width="1"/><path d="M2 13h12" stroke="#000" stroke-width="1.500"/><path d="M0 13l3.500-2.600v5.200zM16 13l-3.500-2.600v5.200z" fill="#000"/></svg>
<svg style="left:776px;top:81px" width="16" height="16" viewBox="0 0 16 16"><defs><linearGradient id="g21"><stop offset="0" stop-color="#0000b0"/><stop offset=".4" stop-color="#1a1aff"/><stop offset="1" stop-color="#fff"/></linearGradient></defs><rect x="1" y="1" width="14" height="8" fill="url(#g21)" stroke="#222" stroke-width="1"/><path d="M1 13h12" stroke="#000" stroke-width="1.500"/><path d="M16 13l-4-2.600v5.200z" fill="#000"/></svg>
<svg style="left:806px;top:81px" width="16" height="16" viewBox="0 0 16 16"><path d="M1 1q1.500 1 3 0t3 0 3 0 3 0 2 0q-1 1.500 0 3t0 3 0 3 0 3 0 2q-1.500-1-3 0t-3 0-3 0-3 0-2 0q1-1.500 0-3t0-3 0-3 0-3z" fill="#a9c7e8" stroke="#5a7ea8" stroke-width="1"/><g transform="translate(4.2 3.2) scale(0.88)" fill="none" stroke="#1a1a2a" stroke-linecap="round" stroke-linejoin="round"><circle cx="4.6" cy="1.3" r="1.2" fill="#1a1a2a" stroke="none"/><path d="M4.2 3.2L3.6 6.5" stroke-width="2.2"/><path d="M3.6 6.5L5.4 8.4 5.2 10.6M3.6 6.5L2.4 8.4 1 10.4" stroke-width="1.3"/><path d="M4.3 3.6L6.4 5l.8-.6M3.8 3.6L2 4.6 1.6 6" stroke-width="1"/></g></svg>
<div style="left:832px;top:78px;width:1px;height:24px;background:#858585"></div>
<svg style="left:844px;top:81px" width="16" height="16" viewBox="0 0 16 16"><defs><linearGradient id="g22" x1="0" y1="0" x2="1" y2="1"><stop offset="0" stop-color="#fff"/><stop offset="1" stop-color="#e4c8a4"/></linearGradient></defs><path d="M.5 3.500l3-3h3.500v15h-6.500z" fill="url(#g22)" stroke="#6a6a6a" stroke-width="1" stroke-linejoin="round"/><path d="M15.500 3.500l-3-3h-3.500v15h6.500z" fill="url(#g22)" stroke="#6a6a6a" stroke-width="1" stroke-linejoin="round"/></svg>
<svg style="left:874px;top:81px" width="16" height="16" viewBox="0 0 16 16"><defs><linearGradient id="g23" x1="0" y1="0" x2="1" y2="1"><stop offset="0" stop-color="#fff"/><stop offset="1" stop-color="#e4c8a4"/></linearGradient></defs><path d="M1.500 1.500h10l3 3v2.500h-13z" fill="url(#g23)" stroke="#6a6a6a" stroke-width="1" stroke-linejoin="round"/><path d="M1.500 9.500h13v2.500l-3 3h-10z" fill="url(#g23)" stroke="#6a6a6a" stroke-width="1" stroke-linejoin="round"/></svg>
<svg style="left:904px;top:81px" width="16" height="16" viewBox="0 0 16 16"><path d="M6.500.5h6l3 3v7h-9z" fill="#f8ecd8" stroke="#222" stroke-width="1"/><g transform="translate(8.5 1.5) scale(0.75)" fill="none" stroke="#111" stroke-linecap="round" stroke-linejoin="round"><circle cx="4.6" cy="1.3" r="1.2" fill="#111" stroke="none"/><path d="M4.2 3.2L3.6 6.5" stroke-width="2.2"/><path d="M3.6 6.5L5.4 8.4 5.2 10.6M3.6 6.5L2.4 8.4 1 10.4" stroke-width="1.3"/><path d="M4.3 3.6L6.4 5l.8-.6M3.8 3.6L2 4.6 1.6 6" stroke-width="1"/></g><rect x=".5" y="6.500" width="11" height="9" fill="#f3dfc6" stroke="#111" stroke-width="1"/><path d="M2 13l3-2 2 1.500 3-3M4 9l2 3M7 9.500l1.500 3" stroke="#111" stroke-width="1.200" fill="none" stroke-linecap="round"/></svg>
<svg style="left:934px;top:81px" width="16" height="16" viewBox="0 0 16 16"><path d="M.5.5h6l3 3v7h-9z" fill="#f8ecd8" stroke="#222" stroke-width="1"/><g transform="translate(2 1.5) scale(0.75)" fill="none" stroke="#111" stroke-linecap="round" stroke-linejoin="round"><circle cx="4.6" cy="1.3" r="1.2" fill="#111" stroke="none"/><path d="M4.2 3.2L3.6 6.5" stroke-width="2.2"/><path d="M3.6 6.5L5.4 8.4 5.2 10.6M3.6 6.5L2.4 8.4 1 10.4" stroke-width="1.3"/><path d="M4.3 3.6L6.4 5l.8-.6M3.8 3.6L2 4.6 1.6 6" stroke-width="1"/></g><rect x="4.500" y="6.500" width="11" height="9" fill="#f3dfc6" stroke="#111" stroke-width="1"/><path d="M6 10l3 1.500 2-1 3 3M8 13l2-2.500M11 13.500l1-3" stroke="#111" stroke-width="1.200" fill="none" stroke-linecap="round"/></svg>
<div style="left:728px;top:48px;width:73px;height:21px;background:#fff;border:1px solid #abadb3"></div>
<div class="t" style="left:732.5px;top:53.5px;font-size:12px;color:#000;letter-spacing:-0.1px;">72%</div>
<div style="left:783px;top:50px;width:16px;height:17px;border:1px solid #acacac;background:linear-gradient(#f2f2f2,#dddddd)"></div>
<svg style="left:787px;top:57px" width="8" height="4" viewBox="0 0 8 4"><path d="M0.5 0h7L4 3.6z" fill="#000"/></svg>
<svg style="left:812px;top:50px" width="16" height="16" viewBox="0 0 16 16"><path d="M9.500 9.500l5 5" stroke="#1a1a1a" stroke-width="3.400" stroke-linecap="round"/><path d="M9 9l2 2" stroke="#e8c020" stroke-width="1.600"/><circle cx="6" cy="6" r="4.700" fill="#ececec" stroke="#1a1a1a" stroke-width="1.700"/><path d="M3.500 6h5" stroke="#111" stroke-width="1.200"/><path d="M6 3.500v5" stroke="#111" stroke-width="1.200"/></svg>
<svg style="left:842px;top:50px" width="16" height="16" viewBox="0 0 16 16"><path d="M9.500 9.500l5 5" stroke="#1a1a1a" stroke-width="3.400" stroke-linecap="round"/><path d="M9 9l2 2" stroke="#e8c020" stroke-width="1.600"/><circle cx="6" cy="6" r="4.700" fill="#ececec" stroke="#1a1a1a" stroke-width="1.700"/><path d="M3.500 6h5" stroke="#111" stroke-width="1.200"/></svg>
<svg style="left:872px;top:50px" width="16" height="16" viewBox="0 0 16 16"><g transform="translate(2 2)"><defs><linearGradient id="g24" x1="0" y1="0" x2="0" y2="1"><stop offset="0" stop-color="#6ab8f0"/><stop offset=".5" stop-color="#e8f4fc"/></linearGradient></defs><rect x="0" y="0" width="12" height="12" fill="url(#g24)" stroke="#3a3a3a" stroke-width="1"/><rect x=".6" y="7.92" width="10.8" height="3.48" fill="#f0b030"/><path d="M.6 8.64L.6 6.0 2.64 4.32l1.6800000000000002 1.92 2.64-3.5999999999999996 2.4000000000000004 3.12 1.2000000000000002-0.72V8.879999999999999L6.0 9.600000000000001z" fill="#2a7414"/><path d="M3.5999999999999996 9.84l7.199999999999999-0.96" stroke="#fbe08a" stroke-width=".8"/></g><path d="M0 0l3 3M16 0l-3 3M0 16l3-3M16 16l-3-3" stroke="#111" stroke-width="1.200"/></svg>
<svg style="left:902px;top:50px" width="16" height="16" viewBox="0 0 16 16"><g transform="translate(3 3)"><defs><linearGradient id="g25" x1="0" y1="0" x2="0" y2="1"><stop offset="0" stop-color="#6ab8f0"/><stop offset=".5" stop-color="#e8f4fc"/></linearGradient></defs><rect x="0" y="0" width="10" height="10" fill="url(#g25)" stroke="#3a3a3a" stroke-width="1"/><rect x=".6" y="6.6000000000000005" width="8.8" height="2.8000000000000003" fill="#f0b030"/><path d="M.6 7.199999999999999L.6 5.0 2.2 3.5999999999999996l1.4000000000000001 1.6 2.2-3.0 2.0 2.6 1.0-0.6V7.4L5.0 8.0z" fill="#2a7414"/><path d="M3.0 8.2l6.0-0.8" stroke="#fbe08a" stroke-width=".8"/></g><path d="M.5 4V.5H4M12 .5h3.500V4M.5 12v3.500H4M12 15.500h3.500V12" stroke="#333" stroke-width="1.100" fill="none"/></svg>
<svg style="left:932px;top:50px" width="16" height="16" viewBox="0 0 16 16"><rect x=".5" y="1" width="15" height="1.800" fill="#222"/><rect x="1.500" y="2.800" width="13" height="8.500" fill="#a8d4ff" stroke="#222" stroke-width="1"/><path d="M8 11.500v1.500M8 12.500l-4 3M8 12.500l4 3" stroke="#222" stroke-width="1.100" fill="none"/></svg>
<svg style="left:0;top:105px" width="1271" height="489"><rect width="1271" height="489" fill="#ababab"/><rect width="1271" height="489" filter="url(#tex)"/></svg>
<div style="left:0px;top:105px;width:1271px;height:1px;background:rgba(0,0,0,.18)"></div>
<div style="left:0px;top:105px;width:1px;height:489px;background:rgba(0,0,0,.15)"></div>
<div style="left:1271px;top:105px;width:95px;height:605px;background:#f0f0f0;border-left:1px solid #f8f8f8"></div>
<div style="left:0px;top:594px;width:1270px;height:116px;background:#f0f0f0"></div>
<div style="left:0px;top:594px;width:1270px;height:1px;background:#f6f6f6"></div>
<div style="left:59px;top:597px;width:1208px;height:109px;background:#fff;border:1px solid #7a8493;"></div>
<div style="left:60px;top:598px;width:1206px;height:107px;border:1px solid #e8e8e8;border-right:0;border-bottom:0"></div>
<div style="left:1268px;top:594px;width:1px;height:116px;background:#fafafa"></div>
<div style="left:1269px;top:594px;width:1px;height:116px;background:#dadada"></div>
<div style="left:0px;top:709px;width:1366px;height:1px;background:#d7d7d7"></div>
<div style="left:0px;top:710px;width:1366px;height:18px;background:#f0f0f0"></div>
<div class="t" style="left:1.5px;top:715px;font-size:11px;color:#000;letter-spacing:-0.175px;">Připraven</div>
<div style="left:199px;top:711px;width:1px;height:17px;background:#d8d8d8"></div>
<div style="left:200px;top:711px;width:1px;height:17px;background:#fff"></div>
<div style="left:309px;top:711px;width:1px;height:17px;background:#d8d8d8"></div>
<div style="left:310px;top:711px;width:1px;height:17px;background:#fff"></div>
<div style="left:429px;top:711px;width:1px;height:17px;background:#d8d8d8"></div>
<div style="left:430px;top:711px;width:1px;height:17px;background:#fff"></div>
<div class="t" style="left:221.5px;top:715px;font-size:11px;color:#000;letter-spacing:-0.101px;">800x600x16M</div>
<div class="t" style="left:434px;top:715px;font-size:11px;color:#000;letter-spacing:0.211px;">0,0 ==> 799,599 (Š=800, V=600)</div>
<div style="left:3px;top:109px;width:699px;height:481px;background:#d6e3f1;border:1px solid #3c3f44;border-radius:6px 6px 1px 1px"></div>
<div style="left:4px;top:110px;width:697px;height:26px;background:linear-gradient(#b9c9db,#c6d5e6 45%,#d6e3f1);border-radius:5px 5px 0 0"></div>
<div style="left:4px;top:110px;width:697px;height:1px;background:rgba(255,255,255,.5);border-radius:5px 5px 0 0;left:8px;width:689px"></div>
<div class="t" style="left:250.4px;top:117px;font-size:15px;color:#000;letter-spacing:-0.061px;">Nepojmenovaný 1</div>
<div class="cap" style="left:596px;top:115px;width:32px;height:18px;"><svg style="left:0;top:0" width="30" height="16" viewBox="0 0 30 16"><rect x="9.5" y="7.6" width="11" height="3.8" rx="1.2" fill="#f4f4f4" stroke="#3c3f4d" stroke-width="1.1"/></svg></div>
<div class="cap" style="left:630px;top:115px;width:32px;height:18px;"><svg style="left:0;top:0" width="30" height="16" viewBox="0 0 30 16"><rect x="10.0" y="4" width="10" height="8" rx="1.2" fill="#f4f4f4" stroke="#3c3f4d" stroke-width="1.1"/><rect x="13.0" y="6.8" width="4" height="2.4" fill="#c9d6e6" stroke="#3c3f4d" stroke-width="1"/></svg></div>
<div class="cap" style="left:664px;top:115px;width:32px;height:18px;"><svg style="left:0;top:0" width="30" height="16" viewBox="0 0 30 16"><path d="M9.4 3.8h4l1.6 1.9 1.6-1.9h4l-3.5 4.1 3.6 4.3h-4.100l-1.600-2-1.600 2h-4.100l3.600-4.300z" fill="#f6f6f6" stroke="#3c3f4d" stroke-width="1" stroke-linejoin="round"/></svg></div>
<svg style="left:9px;top:116px" width="16" height="16" viewBox="0 0 16 16"><defs><linearGradient id="g26"><stop offset="0" stop-color="#f00"/><stop offset=".3" stop-color="#fc0"/><stop offset=".5" stop-color="#0c3"/><stop offset=".75" stop-color="#09f"/><stop offset="1" stop-color="#03c"/></linearGradient></defs><path d="M1.500.5h9l3 3v12h-12z" fill="#fbf6e6" stroke="#555" stroke-width="1"/><path d="M10.500.5v3h3" fill="#ddd" stroke="#555" stroke-width=".8"/><rect x="2.500" y="5" width="10" height="8.500" fill="#111"/><rect x="2.500" y="7.200" width="10" height="4" fill="url(#g26)"/><rect x="3.3" y="5.700" width="1.100" height="1" fill="#fff"/><rect x="3.3" y="12" width="1.100" height="1" fill="#fff"/><rect x="5.4" y="5.700" width="1.100" height="1" fill="#fff"/><rect x="5.4" y="12" width="1.100" height="1" fill="#fff"/><rect x="7.5" y="5.700" width="1.100" height="1" fill="#fff"/><rect x="7.5" y="12" width="1.100" height="1" fill="#fff"/><rect x="9.600000000000001" y="5.700" width="1.100" height="1" fill="#fff"/><rect x="9.600000000000001" y="12" width="1.100" height="1" fill="#fff"/><rect x="11.7" y="5.700" width="1.100" height="1" fill="#fff"/><rect x="11.7" y="12" width="1.100" height="1" fill="#fff"/></svg>
<div style="left:7px;top:136px;width:691px;height:450px;background:#dcdcdc"></div>
<div style="left:7px;top:136px;width:95px;height:450px;background:#f0f0f0"></div>
<div style="left:102px;top:136px;width:1px;height:450px;background:#a6a6a6"></div>
<div style="left:7px;top:585px;width:691px;height:1px;background:#eef3f9"></div>
<div class="t" style="left:11px;top:149px;font-size:11px;color:#000;letter-spacing:0.006px;">Vrstva 1</div>
<div style="left:7px;top:169px;width:94px;height:29px;border:2px solid #ff9a0a;background:#f0f0f0;box-shadow:inset 0 0 0 1px #f7f7f7"></div>
<div class="t" style="left:10.5px;top:179.5px;font-size:11px;color:#000;letter-spacing:-0.542px;">Pozadí</div>
<div style="left:114px;top:147px;width:581px;height:436px;background:linear-gradient(135deg,#000 0,#000 100%);opacity:0"></div>
<div style="left:691px;top:148px;width:4px;height:435px;background:linear-gradient(90deg,#1a1a1a,#5e5e5e 40%,#b4b4b4 80%,#d4d4d4)"></div>
<div style="left:115px;top:579px;width:580px;height:4px;background:linear-gradient(180deg,#1a1a1a,#5e5e5e 40%,#b4b4b4 80%,#d4d4d4)"></div>
<div style="left:691px;top:579px;width:4px;height:4px;background:radial-gradient(circle 4px at 0 0,#1a1a1a,#5e5e5e 40%,#b4b4b4 75%,#d4d4d4)"></div>
<div style="left:110px;top:143px;width:581px;height:436px;background:#fff;border:1px solid #000"></div>
<div class="t" style="left:110px;width:581px;top:168.5px;font-size:67.7px;text-align:center;-webkit-text-stroke:1.2px #000;transform:scaleX(1.035);transform-origin:50% 50%;line-height:77.79px;height:78px">z = ž</div>
<div class="t" style="left:110px;width:581px;top:245.8px;font-size:67.7px;text-align:center;-webkit-text-stroke:1.2px #000;transform:scaleX(1.035);transform-origin:50% 50%;line-height:77.79px;height:78px">s = š</div>
<div class="t" style="left:110px;width:581px;top:323.1px;font-size:67.7px;text-align:center;-webkit-text-stroke:1.2px #000;transform:scaleX(1.035);transform-origin:50% 50%;line-height:77.79px;height:78px">r = ø</div>
<div class="t" style="left:110px;width:581px;top:400.4px;font-size:67.7px;text-align:center;-webkit-text-stroke:1.2px #000;transform:scaleX(1.035);transform-origin:50% 50%;line-height:77.79px;height:78px">e = ì</div>
<div class="t" style="left:110px;width:581px;top:477.7px;font-size:67.7px;text-align:center;-webkit-text-stroke:1.2px #000;transform:scaleX(1.035);transform-origin:50% 50%;line-height:77.79px;height:78px">c = è</div>
<div style="left:491px;top:267px;width:383px;height:193px;background:#c3d9f0;border:1px solid #2b2f36;border-radius:6px 6px 1px 1px"></div>
<div style="left:492px;top:268px;width:381px;height:25px;background:linear-gradient(#98b4d6,#a9c3e2 50%,#bdd4ee);border-radius:5px 5px 0 0;border-top:1px solid #e6f0fb"></div>
<div style="left:872px;top:272px;width:1px;height:187px;background:#5fd4fa"></div>
<div style="left:492px;top:458px;width:381px;height:1px;background:#5fd4fa"></div>
<div style="left:492px;top:293px;width:1px;height:165px;background:#dbe8f6"></div>
<div class="t" style="left:600px;top:274px;font-size:15px;color:#000;letter-spacing:-0.09px;">PhotoFiltre Studio X</div>
<div style="left:837px;top:272px;width:32px;height:18px;border:1px solid #431c22;border-radius:3px;background:linear-gradient(#eaaea2,#d98a78 48%,#bb4126 52%,#d78a72);box-shadow:inset 0 0 0 1px rgba(255,255,255,.35)"><svg style="left:0;top:0" width="30" height="16" viewBox="0 0 30 16"><path d="M9.4 3.8h4l1.6 1.9 1.6-1.9h4l-3.5 4.1 3.6 4.3h-4.100l-1.600-2-1.600 2h-4.100l3.600-4.300z" fill="#f6f6f6" stroke="#3c3f4d" stroke-width="1" stroke-linejoin="round"/></svg></div>
<div style="left:493px;top:293px;width:378px;height:108px;background:#fff"></div>
<div style="left:493px;top:401px;width:378px;height:1px;background:#aeaeae"></div>
<div style="left:493px;top:402px;width:378px;height:56px;background:#f0f0f0"></div>
<div class="t" style="left:510px;top:315px;font-size:11px;color:#000;font-weight:700;letter-spacing:0.43px;">Potvrdit</div>
<div style="left:510px;top:329px;width:345px;height:2px;background:#000"></div>
<div class="t" style="left:553.5px;top:351px;font-size:11px;color:#000;letter-spacing:-0.272px;">Uložit zmìny pøed pokraèováním?</div>
<svg style="left:509px;top:348px" width="34" height="34" viewBox="0 0 34 34"><defs><radialGradient id="qg" cx=".4" cy=".25" r=".9"><stop offset="0" stop-color="#6a92e4"/><stop offset=".4" stop-color="#2450bc"/><stop offset="1" stop-color="#0c2a86"/></radialGradient><linearGradient id="qr" x1="0" y1="0" x2="0" y2="1"><stop offset="0" stop-color="#ffffff"/><stop offset="1" stop-color="#c4c8d0"/></linearGradient></defs><circle cx="17" cy="17" r="15.800" fill="url(#qr)" stroke="#5a5e66" stroke-width="1"/><circle cx="17" cy="17" r="13.400" fill="url(#qg)" stroke="#0d2a78" stroke-width="1"/><ellipse cx="17" cy="10.500" rx="10.500" ry="6.500" fill="#fff" opacity=".22"/><text x="17" y="26" font-family="Liberation Sans" font-weight="700" font-size="25" text-anchor="middle" fill="#fff">?</text></svg>
<div class="btn" style="left:622px;top:419px;width:73px;height:23px;border-color:#3399ff;background:linear-gradient(#f1f1f1,#e4e4e4);box-shadow:inset 0 0 0 1px #bfe0ff">Ano</div>
<div class="btn" style="left:702px;top:419px;width:73px;height:23px;">Ne</div>
<div class="btn" style="left:782px;top:419px;width:73px;height:23px;">Zrušit</div>
<div style="left:1278px;top:111px;width:40px;height:38px;background:#000;border:1px solid #fff;border-right-color:#9a9a9a;border-bottom-color:#9a9a9a;z-index:2"></div>
<div style="left:1295px;top:129px;width:40px;height:38px;background:#fff;border-right:1px solid #a8a8a8;border-bottom:1px solid #a8a8a8"></div>
<div style="left:1340px;top:111px;width:19px;height:56px;border:1px solid #b8b8b8;background:linear-gradient(#ff0000,#ff8000 10%,#ffff00 20%,#00ff00 38%,#00ffff 55%,#0000ff 70%,#c000ff 80%,#ff00e0 87%,#ff0080 94%,#ff0018)"></div>
<svg style="left:1319px;top:112px" width="15" height="15" viewBox="0 0 15 15"><path d="M3.5 4.500H8q2.500 0 2.500 2.500V11" fill="none" stroke="#000" stroke-width="1.600"/><path d="M0 4.500L4.500 1v7zM10.500 14.500L7 10h7z" fill="#000"/></svg>
<div style="left:1284px;top:155px;width:8.5px;height:8.5px;border:1px solid #000;background:#fff"></div>
<div style="left:1281px;top:152px;width:8px;height:8px;background:#000"></div>
<div style="left:1278px;top:170px;width:10px;height:10px;background:#000000;border-top:1px solid #b0b0b0;border-left:1px solid #b0b0b0"></div>
<div style="left:1288px;top:170px;width:10px;height:10px;background:#993300;border-top:1px solid #b0b0b0;border-left:1px solid #b0b0b0"></div>
<div style="left:1298px;top:170px;width:10px;height:10px;background:#333300;border-top:1px solid #b0b0b0;border-left:1px solid #b0b0b0"></div>
<div style="left:1308px;top:170px;width:10px;height:10px;background:#003300;border-top:1px solid #b0b0b0;border-left:1px solid #b0b0b0"></div>
<div style="left:1318px;top:170px;width:10px;height:10px;background:#003366;border-top:1px solid #b0b0b0;border-left:1px solid #b0b0b0"></div>
<div style="left:1328px;top:170px;width:10px;height:10px;background:#000080;border-top:1px solid #b0b0b0;border-left:1px solid #b0b0b0"></div>
<div style="left:1338px;top:170px;width:10px;height:10px;background:#333399;border-top:1px solid #b0b0b0;border-left:1px solid #b0b0b0"></div>
<div style="left:1348px;top:170px;width:10px;height:10px;background:#333333;border-top:1px solid #b0b0b0;border-left:1px solid #b0b0b0"></div>
<div style="left:1278px;top:180px;width:10px;height:10px;background:#800000;border-top:1px solid #b0b0b0;border-left:1px solid #b0b0b0"></div>
<div style="left:1288px;top:180px;width:10px;height:10px;background:#ff6600;border-top:1px solid #b0b0b0;border-left:1px solid #b0b0b0"></div>
<div style="left:1298px;top:180px;width:10px;height:10px;background:#808000;border-top:1px solid #b0b0b0;border-left:1px solid #b0b0b0"></div>
<div style="left:1308px;top:180px;width:10px;height:10px;background:#008000;border-top:1px solid #b0b0b0;border-left:1px solid #b0b0b0"></div>
<div style="left:1318px;top:180px;width:10px;height:10px;background:#008080;border-top:1px solid #b0b0b0;border-left:1px solid #b0b0b0"></div>
<div style="left:1328px;top:180px;width:10px;height:10px;background:#0000ff;border-top:1px solid #b0b0b0;border-left:1px solid #b0b0b0"></div>
<div style="left:1338px;top:180px;width:10px;height:10px;background:#666699;border-top:1px solid #b0b0b0;border-left:1px solid #b0b0b0"></div>
<div style="left:1348px;top:180px;width:10px;height:10px;background:#808080;border-top:1px solid #b0b0b0;border-left:1px solid #b0b0b0"></div>
<div style="left:1278px;top:190px;width:10px;height:10px;background:#ff0000;border-top:1px solid #b0b0b0;border-left:1px solid #b0b0b0"></div>
<div style="left:1288px;top:190px;width:10px;height:10px;background:#ff9900;border-top:1px solid #b0b0b0;border-left:1px solid #b0b0b0"></div>
<div style="left:1298px;top:190px;width:10px;height:10px;background:#99cc00;border-top:1px solid #b0b0b0;border-left:1px solid #b0b0b0"></div>
<div style="left:1308px;top:190px;width:10px;height:10px;background:#339966;border-top:1px solid #b0b0b0;border-left:1px solid #b0b0b0"></div>
<div style="left:1318px;top:190px;width:10px;height:10px;background:#33cccc;border-top:1px solid #b0b0b0;border-left:1px solid #b0b0b0"></div>
<div style="left:1328px;top:190px;width:10px;height:10px;background:#3366ff;border-top:1px solid #b0b0b0;border-left:1px solid #b0b0b0"></div>
<div style="left:1338px;top:190px;width:10px;height:10px;background:#800080;border-top:1px solid #b0b0b0;border-left:1px solid #b0b0b0"></div>
<div style="left:1348px;top:190px;width:10px;height:10px;background:#969696;border-top:1px solid #b0b0b0;border-left:1px solid #b0b0b0"></div>
<div style="left:1278px;top:200px;width:10px;height:10px;background:#ff00ff;border-top:1px solid #b0b0b0;border-left:1px solid #b0b0b0"></div>
<div style="left:1288px;top:200px;width:10px;height:10px;background:#ffcc00;border-top:1px solid #b0b0b0;border-left:1px solid #b0b0b0"></div>
<div style="left:1298px;top:200px;width:10px;height:10px;background:#ffff00;border-top:1px solid #b0b0b0;border-left:1px solid #b0b0b0"></div>
<div style="left:1308px;top:200px;width:10px;height:10px;background:#00ff00;border-top:1px solid #b0b0b0;border-left:1px solid #b0b0b0"></div>
<div style="left:1318px;top:200px;width:10px;height:10px;background:#00ffff;border-top:1px solid #b0b0b0;border-left:1px solid #b0b0b0"></div>
<div style="left:1328px;top:200px;width:10px;height:10px;background:#00ccff;border-top:1px solid #b0b0b0;border-left:1px solid #b0b0b0"></div>
<div style="left:1338px;top:200px;width:10px;height:10px;background:#993366;border-top:1px solid #b0b0b0;border-left:1px solid #b0b0b0"></div>
<div style="left:1348px;top:200px;width:10px;height:10px;background:#c0c0c0;border-top:1px solid #b0b0b0;border-left:1px solid #b0b0b0"></div>
<div style="left:1278px;top:210px;width:10px;height:10px;background:#ff99cc;border-top:1px solid #b0b0b0;border-left:1px solid #b0b0b0"></div>
<div style="left:1288px;top:210px;width:10px;height:10px;background:#ffcc99;border-top:1px solid #b0b0b0;border-left:1px solid #b0b0b0"></div>
<div style="left:1298px;top:210px;width:10px;height:10px;background:#ffff99;border-top:1px solid #b0b0b0;border-left:1px solid #b0b0b0"></div>
<div style="left:1308px;top:210px;width:10px;height:10px;background:#ccffcc;border-top:1px solid #b0b0b0;border-left:1px solid #b0b0b0"></div>
<div style="left:1318px;top:210px;width:10px;height:10px;background:#ccffff;border-top:1px solid #b0b0b0;border-left:1px solid #b0b0b0"></div>
<div style="left:1328px;top:210px;width:10px;height:10px;background:#99ccff;border-top:1px solid #b0b0b0;border-left:1px solid #b0b0b0"></div>
<div style="left:1338px;top:210px;width:10px;height:10px;background:#cc99ff;border-top:1px solid #b0b0b0;border-left:1px solid #b0b0b0"></div>
<div style="left:1348px;top:210px;width:10px;height:10px;background:#ffffff;border-top:1px solid #b0b0b0;border-left:1px solid #b0b0b0"></div>
<div style="left:1278px;top:223px;width:38px;height:14px;border:1px solid #a4a4a4;border-bottom:0;background:linear-gradient(#f2f2f2,#e9e9e9);box-shadow:inset 1px 1px 0 #fff"></div>
<div style="left:1321px;top:223px;width:38px;height:14px;border:1px solid #a4a4a4;border-bottom:0;background:linear-gradient(#f2f2f2,#e9e9e9);box-shadow:inset 1px 1px 0 #fff"></div>
<svg style="left:1294px;top:227px" width="4" height="6" viewBox="0 0 4 6"><path d="M3.500 0v6L0 3z" fill="#000"/></svg>
<svg style="left:1338px;top:227px" width="4" height="6" viewBox="0 0 4 6"><path d="M.5 0v6L4 3z" fill="#000"/></svg>
<div style="left:1306px;top:244px;width:26px;height:24px;background:#fff;border:1px solid #3c3c3c;box-shadow:inset 0 0 0 1px #d8d8d8"></div>
<svg style="left:1284px;top:249px" width="16" height="16" viewBox="0 0 16 16"><path d="M3 .8V13l3-2.600 2.300 5 2-.9-2.300-4.900H12z" fill="#fff" stroke="#111" stroke-width="1.100" stroke-linejoin="round"/></svg>
<svg style="left:1311px;top:249px" width="16" height="16" viewBox="0 0 16 16"><rect x=".5" y=".5" width="12" height="10" fill="#fff" stroke="#222" stroke-width="1.300"/><rect x="1.0" y="1.0" width="1.500" height="1.500" fill="#bbb"/><rect x="4.0" y="1.0" width="1.500" height="1.500" fill="#bbb"/><rect x="7.0" y="1.0" width="1.500" height="1.500" fill="#bbb"/><rect x="2.5" y="2.5" width="1.500" height="1.500" fill="#bbb"/><rect x="5.5" y="2.5" width="1.500" height="1.500" fill="#bbb"/><rect x="8.5" y="2.5" width="1.500" height="1.500" fill="#bbb"/><rect x="1.0" y="4.0" width="1.500" height="1.500" fill="#bbb"/><rect x="4.0" y="4.0" width="1.500" height="1.500" fill="#bbb"/><rect x="7.0" y="4.0" width="1.500" height="1.500" fill="#bbb"/><rect x="2.5" y="5.5" width="1.500" height="1.500" fill="#bbb"/><rect x="5.5" y="5.5" width="1.500" height="1.500" fill="#bbb"/><rect x="8.5" y="5.5" width="1.500" height="1.500" fill="#bbb"/><rect x="3.500" y="4.500" width="12" height="11" fill="#e8ecf8" stroke="#4a5a9a" stroke-width="1"/><rect x="4" y="5" width="11" height="2.500" fill="#7088c8"/><path d="M6 10h2M10 10h3M6 12.500h2M10 12.500h3" stroke="#4a5a9a" stroke-width="1"/></svg>
<svg style="left:1338px;top:249px" width="16" height="16" viewBox="0 0 16 16"><path d="M4 10L1.800 6.800Q1.300 5.200 2.800 5.600L4.800 8V2.600Q5.700 1.200 6.600 2.600V6.500 1.600Q7.500.2 8.400 1.600V6.500 2.200Q9.300.8 10.200 2.200V7 4Q11.100 2.800 12 4V10.500Q12 13.500 10 15.500H5.500Q4.500 12.500 4 10z" fill="#d2d2d2" stroke="#7a7a7a" stroke-width="1" stroke-linejoin="round" transform="translate(-.5 -.3) scale(1.220 1.050)"/><path d="M6.500 9v3M8.400 9v3M10.200 9v3" stroke="#aaa" stroke-width=".7" transform="translate(-.5 -.3) scale(1.220 1.050)"/></svg>
<svg style="left:1284px;top:275px" width="16" height="16" viewBox="0 0 16 16"><path d="M2 15l1-3.500 6-6 2 2-6 6z" fill="#fff" stroke="#222" stroke-width="1"/><path d="M8 4.500l3.500 3.500" stroke="#111" stroke-width="2.200" stroke-linecap="round"/><circle cx="12" cy="3.700" r="2.600" fill="#111"/><path d="M1.500 15.500l1.500-2" stroke="#111" stroke-width="1"/></svg>
<svg style="left:1311px;top:275px" width="16" height="16" viewBox="0 0 16 16"><path d="M5.500 5.500L15 15" stroke="#1a2a5a" stroke-width="2.600" stroke-linecap="round"/><path d="M6 6l8.500 8.500" stroke="#4a90e0" stroke-width="1"/><path d="M4.500 4.500l2 2" stroke="#111" stroke-width="2.600"/><path d="M3.500 .5v2M.5 3.500h2M1 1l1.200 1.200M6.500 1l-1 1.200M1 6.500l1.200-1M8 3h1.500M3 8v1.500" stroke="#c06a10" stroke-width="1"/></svg>
<svg style="left:1338px;top:275px" width="16" height="16" viewBox="0 0 16 16"><path d="M1.500 14.500L14.500 1.500" stroke="#111" stroke-width="1.800" stroke-linecap="round"/></svg>
<svg style="left:1284px;top:301px" width="16" height="16" viewBox="0 0 16 16"><path d="M4.500 7L10 3l5 7-5.500 4.500z" fill="#fff" stroke="#222" stroke-width="1" stroke-linejoin="round"/><path d="M4.500 7Q1 8 1.500 13" fill="none" stroke="#1aa0b8" stroke-width="2.200"/><path d="M8 5.500V2Q9.500 0 11 2v3" fill="none" stroke="#222" stroke-width="1"/><path d="M6 7.500l4-3" stroke="#bbb" stroke-width="1"/></svg>
<svg style="left:1311px;top:301px" width="16" height="16" viewBox="0 0 16 16"><rect x="6.500" y="6.500" width="7" height="9" rx="1.500" fill="#d9c8ee" stroke="#4a3a6a" stroke-width="1"/><rect x="8" y="9" width="4" height="4" fill="#f4effa" stroke="#8a7aaa" stroke-width=".6"/><rect x="8.500" y="4" width="3" height="2.500" fill="#888"/><rect x="9" y="2.500" width="2.500" height="1.800" fill="#d01020"/><path d="M2 1h1M4.500 1.500h1M1 3.500h1M3.500 3.500h1M6 3.500h1M2 6h1M4.500 5.500h1M6.500 5.500h1" stroke="#b02020" stroke-width="1"/></svg>
<svg style="left:1338px;top:301px" width="16" height="16" viewBox="0 0 16 16"><path d="M1.500 10L11.500 4.500l4 1.500v3L5 14.500l-3.500-1.500z" fill="#f07a7a" stroke="#8a1a1a" stroke-width="1" stroke-linejoin="round"/><path d="M1.500 10l3.500 1.500L15.500 6M5 11.500v3" stroke="#8a1a1a" stroke-width=".9" fill="none"/><path d="M2.500 9.800L11.500 5l3 1.100-9.300 5z" fill="#f8a8a8"/></svg>
<svg style="left:1284px;top:327px" width="16" height="16" viewBox="0 0 16 16"><path d="M8 8.500L12.500.5l1.500 1L9.500 9.500z" fill="#e8c01a" stroke="#6a5200" stroke-width=".8"/><path d="M6.500 8L10 10l-1 2.500L3.500 15 2 15.500 3 13.500z" fill="#4a8a8a" stroke="#123" stroke-width=".9" stroke-linejoin="round"/><path d="M2 15.500l2.500-3" stroke="#bde" stroke-width=".8"/></svg>
<svg style="left:1311px;top:327px" width="16" height="16" viewBox="0 0 16 16"><path d="M8 8.500L12.500.5l1.500 1L9.500 9.500z" fill="#e8c01a" stroke="#6a5200" stroke-width=".8"/><path d="M6.500 8L10 10l-1 2.500L3.500 15 2 15.500 3 13.500z" fill="#4a8a8a" stroke="#123" stroke-width=".9" stroke-linejoin="round"/><path d="M2 15.500l2.500-3" stroke="#bde" stroke-width=".8"/><rect x="10" y="11.500" width="6" height="1.800" fill="#111"/><rect x="12.100" y="9.400" width="1.800" height="6" fill="#111"/></svg>
<svg style="left:1338px;top:327px" width="16" height="16" viewBox="0 0 16 16"><circle cx="8" cy="3.500" r="2.800" fill="#8a5a2a" stroke="#4a2a0a" stroke-width=".8"/><rect x="6.800" y="5.500" width="2.400" height="3.500" fill="#8a5a2a" stroke="#4a2a0a" stroke-width=".6"/><path d="M2 12V10Q2 8.500 4 8.500h8Q14 8.500 14 10v2z" fill="#b8824a" stroke="#4a2a0a" stroke-width=".9"/><rect x="1.500" y="12" width="13" height="2.800" fill="#10208a" stroke="#06104a" stroke-width=".8"/></svg>
<svg style="left:1284px;top:353px" width="16" height="16" viewBox="0 0 16 16"><path d="M8 1C9.500 5 13 8 13 11a5 5 0 0 1-10 0C3 8 6.500 5 8 1z" fill="#c8c8ff" stroke="#333" stroke-width="1"/><path d="M5.500 11a2.500 2.500 0 0 0 2 2.500" stroke="#fff" stroke-width="1" fill="none"/></svg>
<svg style="left:1311px;top:353px" width="16" height="16" viewBox="0 0 16 16"><path d="M3 1.500l5.500 1L13 1v7.500Q12 11 9.500 11.500l-4 3.500H3.500l-1-1.500L6 10.500 3.500 8z" fill="#fff" stroke="#222" stroke-width="1" stroke-linejoin="round"/><path d="M4 3.500l2 2M5.500 3l2 2.500M4 6l2 2M7.500 6l1.500 2" stroke="#222" stroke-width=".9"/></svg>
<svg style="left:1338px;top:353px" width="16" height="16" viewBox="0 0 16 16"><path d="M9.500 6L14 1.500l1.500 1.500L11 7.500z" fill="#e0b020" stroke="#6a5200" stroke-width=".8"/><path d="M7 4.500l5 5-1.500 1.500-5-5z" fill="#8a8a9a" stroke="#334" stroke-width=".8"/><path d="M5.500 6L1 10.500 6 15.500 10.500 11z" fill="#5a6ad8" stroke="#1a2a7a" stroke-width=".9" stroke-linejoin="round"/><path d="M3 10.500l3 3M5 8.500l3 3" stroke="#aab4f8" stroke-width=".8"/></svg>
<svg style="left:1284px;top:379px" width="16" height="16" viewBox="0 0 16 16"><path d="M1.500 2Q5 .5 8 1.500t6.500-.5Q13.500 5 14.500 8t0 6.500Q11 13.500 8 14.500T1.500 14Q2.500 11 1.500 8T1.500 2z" fill="#d8c8e8" stroke="#2a1a3a" stroke-width="1.100"/><path d="M5.500 1.200Q6.500 5 5.500 8t.3 6.300M10.300 1.400Q11 5 10 8t.5 6.300M1.700 5.700Q5 6.500 8 5.700t6.300.3M1.700 10.300Q5 11 8 10t6.500.4" fill="none" stroke="#2a1a3a" stroke-width="1"/></svg>
<svg style="left:1311px;top:379px" width="16" height="16" viewBox="0 0 16 16"><rect x=".5" y=".5" width="15" height="15" fill="#3a2a1a" stroke="#111" stroke-width="1"/><rect x="1.500" y="1.500" width="13" height="5" fill="#6a6a4a" opacity=".6"/><ellipse cx="8" cy="6.300" rx="2.600" ry="3.200" fill="#e8b888"/><path d="M4.500 6Q5 2 8 2t3.500 4Q12 10 11 10.500 10.500 5 8 4.500 5.500 5 5 10.500 4 10 4.500 6z" fill="#1a0e06"/><path d="M2.500 15Q3 10.500 8 10.500t5.500 4.500z" fill="#2a1a10"/><path d="M6 12.500q2 1.500 4 0v2H6z" fill="#d8a070"/></svg>
<svg style="left:1338px;top:379px" width="16" height="16" viewBox="0 0 16 16"><path d="M8 4Q13.500 3 14 7.500 13.500 12 8 15.500 2.500 12 2 7.500 2.500 3 8 4z" fill="#e02828" stroke="#a01010" stroke-width=".6"/><path d="M8 4.500L4.500 2.500 6.500 2 8 .5 9.500 2l2-.5L8 4.500z" fill="#2a9a2a" stroke="#0a5a0a" stroke-width=".6"/><path d="M5 7h.8M8 7h.8M11 7h.8M6.500 9.500h.8M9.500 9.500h.8M8 12h.8M5 10h.5" stroke="#ffd0a0" stroke-width=".9"/></svg>
<div style="left:1278px;top:403px;width:81px;height:1px;background:#c4c4c4"></div>
<div style="left:1278px;top:404px;width:81px;height:1px;background:#fff"></div>
<div class="t" style="left:1280px;top:416px;font-size:11px;color:#000;letter-spacing:-0.542px;text-decoration:underline">Pozadí</div>
<div class="t" style="left:1280px;top:444px;font-size:11px;color:#a0a3ae;letter-spacing:0.018px;">Neprùsvitnost</div>
<div style="left:1280px;top:460px;width:78px;height:21px;background:#fff;border:1px solid #d9d9d9"></div>
<div class="t" style="left:1284px;top:465px;font-size:11px;color:#6d6d6d;letter-spacing:-0.52px;">100</div>
<div style="left:1327px;top:462px;width:13px;height:8px;border:1px solid #d0d0d0;background:#f4f4f4"></div>
<div style="left:1327px;top:471px;width:13px;height:8px;border:1px solid #d0d0d0;background:#f4f4f4"></div>
<svg style="left:1330px;top:464px" width="7" height="4" viewBox="0 0 7 4"><path d="M0 3.500h7L3.500 0z" fill="#777"/></svg>
<svg style="left:1330px;top:473px" width="7" height="4" viewBox="0 0 7 4"><path d="M0 .5h7L3.500 4z" fill="#777"/></svg>
<div style="left:1342px;top:462px;width:15px;height:17px;border:1px solid #d0d0d0;background:#f4f4f4"></div>
<svg style="left:1346px;top:469px" width="7" height="4" viewBox="0 0 7 4"><path d="M0 .3h7L3.500 3.800z" fill="#666"/></svg>
<div style="left:1281px;top:502px;width:13px;height:13px;background:#fff;border:1px solid #333"></div>
<svg style="left:1283px;top:504px" width="9" height="9" viewBox="0 0 9 9"><path d="M1 4.500L3.500 7.500 8 1" fill="none" stroke="#000" stroke-width="1.700"/></svg>
<div class="t" style="left:1297px;top:503.5px;font-size:11px;color:#000;letter-spacing:-0.278px;">Viditelné</div>
<div style="left:1281px;top:520px;width:13px;height:13px;background:#fff;border:1px solid #333"></div>
<div class="t" style="left:1297px;top:521.5px;font-size:11px;color:#000;letter-spacing:-0.349px;">Uzamknuté</div>
<div class="t" style="left:1280px;top:552px;font-size:11px;color:#a0a3ae;letter-spacing:-0.463px;">Mód míchání</div>
<div style="left:1280px;top:567px;width:78px;height:21px;background:#f4f4f4;border:1px solid #a3a8b2;box-shadow:inset 0 0 0 1px #fff"></div>
<div class="t" style="left:1283.5px;top:573px;font-size:11px;color:#5c6070;letter-spacing:-0.391px;">Normální</div>
<div style="left:1341px;top:569px;width:15px;height:17px;border:1px solid #d4d4d4;background:#f0f0f0"></div>
<svg style="left:1345px;top:576px" width="7" height="4" viewBox="0 0 7 4"><path d="M0 .3h7L3.500 3.800z" fill="#555"/></svg>
<svg style="left:6.5px;top:602.5px" width="16" height="16" viewBox="0 0 16 16"><path d="M3.300 5v8.300h6M3.300 7.800h6" stroke="#114a8c" stroke-width="1.100" fill="none"/><g transform="translate(-0.5 -0.5) scale(1)"><path d="M.5 5.200V1.300Q.5 .5 1.300 .5H3.200l1 1.100H7Q7.800 1.600 7.800 2.400V5.200z" fill="#f8e010" stroke="#2a2200" stroke-width=".9" stroke-linejoin="round"/><path d="M1.400 2.700H7" stroke="#fffcb0" stroke-width=".8"/></g><g transform="translate(8.7 4.8) scale(0.88)"><path d="M.5 5.200V1.300Q.5 .5 1.300 .5H3.200l1 1.100H7Q7.800 1.600 7.800 2.400V5.200z" fill="#f8e010" stroke="#2a2200" stroke-width=".9" stroke-linejoin="round"/><path d="M1.400 2.700H7" stroke="#fffcb0" stroke-width=".8"/></g><g transform="translate(8.7 10.3) scale(0.88)"><path d="M.5 5.200V1.300Q.5 .5 1.300 .5H3.200l1 1.100H7Q7.800 1.600 7.800 2.400V5.200z" fill="#f8e010" stroke="#2a2200" stroke-width=".9" stroke-linejoin="round"/><path d="M1.400 2.700H7" stroke="#fffcb0" stroke-width=".8"/></g></svg>
<svg style="left:32.5px;top:602.5px" width="16" height="16" viewBox="0 0 16 16"><path d="M3.300 5v8M3.300 11.500H7" stroke="#b0b0b0" stroke-width="1.100" fill="none"/><rect x="2.800" y="14" width="1" height="1" fill="#b0b0b0"/><path d="M0 4.400V.5Q0 -.3 .8 -.3H2.700l1 1.100H6.500Q7.300 .8 7.300 1.600V4.400z" fill="#e8e8e8" stroke="#b8b8b8" stroke-width=".9"/><rect x="7" y="7.500" width="9" height="8" fill="#d8d8d8" stroke="#b8b8b8" stroke-width="1"/><path d="M8 14l2-3 1.500 2 2-3 1.500 4z" fill="#bebebe"/></svg>
<svg style="left:6.5px;top:629px" width="16" height="16" viewBox="0 0 16 16"><path d="M3.300 5v8M3.300 11.500H6.500" stroke="#114a8c" stroke-width="1.100" fill="none"/><rect x="2.800" y="14" width="1" height="1" fill="#114a8c"/><g transform="translate(-0.5 -0.8) scale(1)"><path d="M.5 5.200V1.300Q.5 .5 1.300 .5H3.200l1 1.100H7Q7.800 1.600 7.800 2.400V5.200z" fill="#f8e010" stroke="#2a2200" stroke-width=".9" stroke-linejoin="round"/><path d="M1.400 2.700H7" stroke="#fffcb0" stroke-width=".8"/></g><g transform="translate(6 5.5) scale(0.68)"><path d="M1 14V5.5h3.5l1 1.5H10v2" fill="#fbe430" stroke="#7a5a00" stroke-width="1" stroke-linejoin="round"/><path d="M1 14.5l3-5.5h11.5l-3.5 5.5z" fill="#fbe430" stroke="#7a5a00" stroke-width="1" stroke-linejoin="round"/><path d="M3 13.5l2.3-3.8h8" fill="none" stroke="#fff6c0" stroke-width=".8"/></g></svg>
<svg style="left:32.5px;top:629px" width="16" height="16" viewBox="0 0 16 16"><path d="M3.300 5v8M3.300 11.500H7" stroke="#114a8c" stroke-width="1.100" fill="none"/><rect x="2.800" y="14" width="1" height="1" fill="#114a8c"/><g transform="translate(-0.5 -0.8) scale(1)"><path d="M.5 5.200V1.300Q.5 .5 1.300 .5H3.200l1 1.100H7Q7.800 1.600 7.800 2.400V5.200z" fill="#f8e010" stroke="#2a2200" stroke-width=".9" stroke-linejoin="round"/><path d="M1.400 2.700H7" stroke="#fffcb0" stroke-width=".8"/></g><g transform="translate(6.5 5.8) scale(0.6)"><rect x=".8" y=".8" width="14.4" height="14.4" rx="1.5" fill="#3f4273" stroke="#2a2c50" stroke-width=".8"/><rect x="3.5" y="1" width="9" height="6.5" fill="#f4efb0"/><rect x="3.5" y=".8" width="9" height="1.3" fill="#ff2a2a"/><path d="M5 4h6M5 5.6h6" stroke="#d8d28a" stroke-width=".7"/><rect x="4.5" y="10" width="7.5" height="5" fill="#e4e4ea"/><rect x="7" y="11.3" width="2.4" height="2.6" fill="#26284d"/></g></svg>
<svg style="left:6.5px;top:655.5px" width="16" height="16" viewBox="0 0 16 16"><path d="M3.300 5v8M3.300 11.500H6.500" stroke="#114a8c" stroke-width="1.100" fill="none"/><rect x="2.800" y="14" width="1" height="1" fill="#114a8c"/><g transform="translate(-0.5 -0.8) scale(1)"><path d="M.5 5.200V1.300Q.5 .5 1.300 .5H3.200l1 1.100H7Q7.800 1.600 7.800 2.400V5.200z" fill="#f8e010" stroke="#2a2200" stroke-width=".9" stroke-linejoin="round"/><path d="M1.400 2.700H7" stroke="#fffcb0" stroke-width=".8"/></g><rect x="7.500" y="7" width="8.500" height="8.500" rx="1.800" fill="none" stroke="#111" stroke-width="1.200" stroke-dasharray="2 1.200"/></svg>
<svg style="left:32.5px;top:655.5px" width="16" height="16" viewBox="0 0 16 16"><path d="M3.300 5v8M3.300 11.500H6.500" stroke="#114a8c" stroke-width="1.100" fill="none"/><rect x="2.800" y="14" width="1" height="1" fill="#114a8c"/><g transform="translate(-0.5 -0.8) scale(1)"><path d="M.5 5.200V1.300Q.5 .5 1.300 .5H3.200l1 1.100H7Q7.800 1.600 7.800 2.400V5.200z" fill="#f8e010" stroke="#2a2200" stroke-width=".9" stroke-linejoin="round"/><path d="M1.400 2.700H7" stroke="#fffcb0" stroke-width=".8"/></g><rect x="7.500" y="7" width="8.500" height="8.500" fill="#b8dcf0" stroke="#234" stroke-width="1.200" stroke-dasharray="2 1.200"/></svg>
<svg style="left:6.5px;top:682.5px" width="16" height="16" viewBox="0 0 16 16"><path d="M3.300 5v8M3.300 11.500H6.500" stroke="#114a8c" stroke-width="1.100" fill="none"/><rect x="2.800" y="14" width="1" height="1" fill="#114a8c"/><g transform="translate(-0.5 -0.8) scale(1)"><path d="M.5 5.200V1.300Q.5 .5 1.300 .5H3.200l1 1.100H7Q7.800 1.600 7.800 2.400V5.200z" fill="#f8e010" stroke="#2a2200" stroke-width=".9" stroke-linejoin="round"/><path d="M1.400 2.700H7" stroke="#fffcb0" stroke-width=".8"/></g><rect x="7.500" y="7" width="9" height="9" fill="#fff" stroke="#111" stroke-width="1"/><rect x="8" y="7.5" width="2" height="2" fill="#111"/><rect x="12" y="7.5" width="2" height="2" fill="#111"/><rect x="10" y="9.5" width="2" height="2" fill="#111"/><rect x="14" y="9.5" width="2" height="2" fill="#111"/><rect x="8" y="11.5" width="2" height="2" fill="#111"/><rect x="12" y="11.5" width="2" height="2" fill="#111"/><rect x="10" y="13.5" width="2" height="2" fill="#111"/><rect x="14" y="13.5" width="2" height="2" fill="#111"/></svg>
<svg style="left:32.5px;top:682.5px" width="16" height="16" viewBox="0 0 16 16"><path d="M5.500 2.500l6 5.800-6 5.800z" fill="#111"/></svg>
<div style="left:0px;top:728px;width:1366px;height:40px;background:linear-gradient(90deg,#2a5982,#2d618b 20%,#29577f 45%,#33668f 60%,#2a5a84 80%,#28557d)"></div>
<svg style="left:0;top:728px" width="1366" height="40"><rect width="1366" height="40" filter="url(#water)" opacity=".16"/></svg>
<div style="left:0px;top:728px;width:1366px;height:1px;background:rgba(20,40,60,.35)"></div>
<svg style="left:30px;top:732px" width="32" height="32" viewBox="0 0 32 32"><defs><radialGradient id="ieg" cx=".4" cy=".3" r=".8"><stop offset="0" stop-color="#9be4ff"/><stop offset=".55" stop-color="#2ab0ec"/><stop offset="1" stop-color="#0f78c8"/></radialGradient><linearGradient id="iey" x1="0" y1="1" x2="1" y2="0"><stop offset="0" stop-color="#e89a00"/><stop offset=".5" stop-color="#ffd21a"/><stop offset="1" stop-color="#f0a800"/></linearGradient></defs><path d="M16.500 5C9.500 5 5 10.500 5 17.500S10 29.500 17 29.500c5 0 9.200-2.700 11-7h-6.300c-1 1.500-2.600 2.300-4.700 2.300-3.500 0-5.600-2.400-5.900-5.800H29c.5-8-4.500-13.500-12.500-13.500zM11.200 14.500C11.700 11.700 13.800 10 16.600 10s4.800 1.700 5.200 4.500z" fill="url(#ieg)"/><path d="M2.500 29C-1 24 8 9 19 3.500 25 .5 30.500 1 31 4.500c.3 2-1 4.500-2 6 .5-2.200.7-4.300-.8-5.300C25.500 3.500 18.500 7 12 14 6 20.500 3 26.500 5.300 29.300c1.200 1.400 3.700 1 6-.2C8 31.500 4.300 31.500 2.500 29z" fill="url(#iey)"/></svg>
<div style="left:79px;top:729px;width:58px;height:39px;background:rgba(255,255,255,.17);border:1px solid rgba(255,255,255,.28);border-bottom:0"></div>
<svg style="left:92px;top:732px" width="32" height="32" viewBox="0 0 32 32"><defs><linearGradient id="exf" x1="0" y1="0" x2="0" y2="1"><stop offset="0" stop-color="#fff0b8"/><stop offset="1" stop-color="#f0cf6a"/></linearGradient><linearGradient id="exb" x1="0" y1="0" x2="0" y2="1"><stop offset="0" stop-color="#7fd0f8"/><stop offset="1" stop-color="#2a9ade"/></linearGradient></defs><path d="M1 7V4.500Q1 3.500 2 3.500h9l1.500 2H30Q31 5.500 31 6.500V28H1z" fill="#e8c66a" stroke="#c9a040" stroke-width=".6"/><rect x="3" y="4.500" width="8" height="2.500" fill="#fff"/><rect x="4" y="4.500" width="3.500" height="2.200" fill="#18b038"/><rect x="11.500" y="6.500" width="8" height="2.500" fill="#fff"/><rect x="12.500" y="6.500" width="3.500" height="2.200" fill="#e0281a"/><rect x="19.500" y="8.500" width="9" height="2.500" fill="#fff"/><rect x="20.500" y="8.500" width="3.500" height="2.200" fill="#1a9af0"/><path d="M1 9.500h10.500l1.500 2H31V28H1z" fill="url(#exf)" stroke="#d8b050" stroke-width=".5"/><path d="M5 30.500V21Q5 19 7 19h18Q27 19 27 21v9.500h-6.500V24h-9v6.500z" fill="url(#exb)" stroke="#d8f2ff" stroke-width=".8" opacity=".95"/><path d="M9 14l.5 6.500L16 21l-6.500.5L9 28l-.5-6.500L2 21l6.500-.5z" fill="#fff" opacity=".85"/></svg>
<svg style="left:154px;top:732px" width="32" height="32" viewBox="0 0 32 32"><g transform="translate(.5 .8) scale(.965)"><circle cx="16" cy="16" r="14.500" fill="#e8c020"/><path d="M16 16L3.440 8.750A14.500 14.500 0 0 1 28.560 8.750z" fill="#dc3a2c"/><path d="M3.440 8.750A14.500 14.500 0 0 1 28.560 8.750L16 8.750z" fill="#dc3a2c"/><path d="M3.440 8.750A14.500 14.500 0 0 0 16 30.500L22 19.500 16 16z" fill="#4aae48"/><path d="M3.440 8.750L10 19.500 16 30.500A14.500 14.500 0 0 1 3.440 8.750z" fill="#4aae48"/><path d="M28.560 8.750A14.500 14.500 0 0 1 16 30.500L22.300 19.600 16 8.750z" fill="#f4cf1c"/><path d="M16 8.750H28.560A14.500 14.500 0 0 1 16 30.500l6.300-10.900z" fill="#f4cf1c"/><circle cx="16" cy="16" r="6.800" fill="#f2f2f2"/><circle cx="16" cy="16" r="5.400" fill="#3f7fd0"/></g></svg>
<svg style="left:216px;top:732px" width="32" height="32" viewBox="0 0 32 32"><defs><radialGradient id="avg" cx=".45" cy=".35" r=".8"><stop offset="0" stop-color="#ffa81a"/><stop offset="1" stop-color="#f07a00"/></radialGradient></defs><g fill="url(#avg)" stroke="url(#avg)" stroke-linecap="round"><path d="M14 14.500L23.600 5" stroke-width="5.500"/><path d="M14 14.500L5.300 20.300" stroke-width="5"/><path d="M14 14.500L25 25.500" stroke-width="6.500"/><path d="M14 14.500L9 5" stroke-width="3.500"/><circle cx="23.600" cy="5.200" r="4.700" stroke="none"/><circle cx="5.300" cy="20.300" r="3.800" stroke="none"/><circle cx="25" cy="25.500" r="5.600" stroke="none"/><circle cx="9" cy="5" r="2.400" stroke="none"/><circle cx="14" cy="14.500" r="7" stroke="none"/></g><circle cx="13.500" cy="13.500" r="4.600" fill="#f4f4f4" stroke="#c8c8c8" stroke-width=".5"/><path d="M11.300 13.700a2.300 2.300 0 1 1 2.300 2.300" fill="none" stroke="#333" stroke-width="1.500"/><path d="M15.900 11.500v4.600" stroke="#333" stroke-width="1.300"/></svg>
<svg style="left:278px;top:732px" width="32" height="32" viewBox="0 0 32 32"><defs><linearGradient id="lbg" x1="0" y1="0" x2="0" y2="1"><stop offset="0" stop-color="#ff6a48"/><stop offset="1" stop-color="#e02a10"/></linearGradient></defs><circle cx="15.700" cy="16.500" r="12" fill="none" stroke="url(#lbg)" stroke-width="3.800"/><circle cx="11.500" cy="3.500" r="3.200" fill="#f04a28"/><path d="M11.500 3.500Q20 14 15.700 29.500" fill="none" stroke="#f04a28" stroke-width="2.800"/><g fill="#f4502c"><circle cx="9.900" cy="15.700" r="2.800"/><circle cx="17.900" cy="9.400" r="2.600"/><circle cx="23.500" cy="15.700" r="2.800"/><circle cx="14.200" cy="20.600" r="3"/></g><path d="M4.500 12Q8 5.500 14.500 5" fill="none" stroke="#ffb4a0" stroke-width="1.100" opacity=".8"/></svg>
<svg style="left:340px;top:732px" width="32" height="32" viewBox="0 0 32 32"><g transform="translate(-2.5 -1.5) scale(1.16)"><path d="M3 17Q3 7 15 6.500T27 15Q27 24 19 24.500 16.500 22 14 24.500 10 27 6 24 3 21 3 17z" fill="#d4e6f8" stroke="#a8c4e0" stroke-width=".8"/><circle cx="12.500" cy="19" r="2.300" fill="#2f6593"/><circle cx="7" cy="16" r="2.200" fill="#e0302a"/><circle cx="11" cy="11" r="2.200" fill="#3ab028"/><circle cx="17" cy="9" r="2.200" fill="#f0b818"/></g><path d="M25 9L16.500 30" stroke="#e88a1a" stroke-width="2.200" stroke-linecap="round"/><path d="M24.300 10.500L25.800 6l.8-4.500 3.200 2-3 4.500-1 3.500z" fill="#e8c89a" stroke="#b89060" stroke-width=".6"/></svg>
<div style="left:389px;top:729px;width:58px;height:39px;background:rgba(255,255,255,.17);border:1px solid rgba(255,255,255,.28);border-bottom:0"></div>
<svg style="left:402px;top:732px" width="32" height="32" viewBox="0 0 32 32"><path d="M1.500 3.500L29 .8v19.500L3.500 23z" fill="#f4f4f4" stroke="#d01c1c" stroke-width="2.400" stroke-linejoin="round"/><path d="M1.500 3.500L15 15 29 .8" fill="none" stroke="#d01c1c" stroke-width="3.600"/><path d="M9 29Q4 22 11 15q3-3.500 7-5 4 1 7 6 5 2 6 7-1 5-8 7.500-8 2-14-1.500z" fill="#f4d818" stroke="#a88a00" stroke-width=".8"/><path d="M12 16q4-4 8-3" fill="none" stroke="#fff8a0" stroke-width="1.500"/><g fill="#1a1208"><ellipse cx="14.500" cy="19.500" rx="2.400" ry="2.800"/><ellipse cx="21" cy="19" rx="2.200" ry="2.500"/><ellipse cx="25.500" cy="24" rx="2.600" ry="2.200"/><ellipse cx="20" cy="27" rx="3.600" ry="2.300"/><ellipse cx="12" cy="25.500" rx="1.800" ry="2.200"/></g><g fill="#6a5ab0" stroke="#e8e0ff" stroke-width=".5"><circle cx="14" cy="9" r="2"/><circle cx="7" cy="14" r="2"/><circle cx="3" cy="22" r="2"/><circle cx="30" cy="20" r="2"/></g></svg>
<div style="left:451px;top:729px;width:58px;height:39px;background:rgba(255,255,255,.17);border:1px solid rgba(255,255,255,.28);border-bottom:0"></div>
<svg style="left:464px;top:732px" width="32" height="32" viewBox="0 0 32 32"><path d="M0 0H26Q32 0 32 6V32H6Q0 32 0 26z" fill="#0e96dc"/><g transform="rotate(38 16 16) translate(-2.800 -2.500) scale(1.160)" fill="#fff"><path d="M16 2Q21 6 21 12H11Q11 6 16 2z"/><rect x="11" y="13" width="10" height="10"/><rect x="12.500" y="14.300" width="2" height="2" fill="#0e96dc"/><rect x="15" y="14.300" width="2" height="2" fill="#0e96dc"/><rect x="17.500" y="14.300" width="2" height="2" fill="#0e96dc"/><path d="M11 24h10l-1.500 3h-7z"/><path d="M10 18l-3.500 5 .8 1.500L10 22zM22 18l3.500 5-.8 1.500L22 22z"/><rect x="13.500" y="28" width="5" height="1.600"/></g></svg>
<svg style="left:526px;top:732px" width="32" height="32" viewBox="0 0 32 32"><rect x="1" y="0" width="30" height="30" fill="#6aa8c8"/><g fill="#2f6a8c"><rect x="1" y="0" width="3" height="30"/><rect x="8" y="0" width="3.500" height="30"/><rect x="20.500" y="0" width="3.500" height="30"/><rect x="28" y="0" width="3" height="30"/><rect x="14.500" y="0" width="3" height="30"/></g><rect x="9" y="3" width="14" height="8" rx="2" fill="#5a6a74"/><path d="M11 7.500h4M17 7.500h4" stroke="#e8e8e8" stroke-width="1.400"/><rect x="7" y="21" width="18" height="7" rx="2" fill="#5a9ac0" stroke="#2f6a8c" stroke-width=".8"/><rect x="9.500" y="24" width="13" height="1.800" fill="#2a4a5c"/><rect x="0" y="29" width="32" height="3" fill="#8ab4cc"/></svg>
<div style="left:575px;top:729px;width:58px;height:39px;background:rgba(255,255,255,.17);border:1px solid rgba(255,255,255,.28);border-bottom:0"></div>
<svg style="left:588px;top:732px" width="32" height="32" viewBox="0 0 32 32"><g fill="#12a5e8"><circle cx="10" cy="9.500" r="8.500"/><circle cx="22" cy="22" r="8.500"/><circle cx="16" cy="16" r="12.500"/></g><text x="16" y="24.300" font-family="Liberation Sans" font-weight="700" font-size="23" text-anchor="middle" fill="#fff">S</text></svg>
<div style="left:637px;top:729px;width:58px;height:39px;background:rgba(255,255,255,.36);border:1px solid rgba(255,255,255,.55);border-bottom:0"></div>
<svg style="left:650px;top:732px" width="32" height="32" viewBox="0 0 32 32"><defs><linearGradient id="stg" x1="1" y1="0" x2="0" y2="1"><stop offset="0" stop-color="#0a3ab0"/><stop offset=".3" stop-color="#12b84a"/><stop offset=".6" stop-color="#f0e010"/><stop offset="1" stop-color="#f02a0a"/></linearGradient></defs><rect x="2.500" y="-.5" width="29.500" height="33" fill="#111"/><rect x="7.500" y=".8" width="20" height="30.500" fill="url(#stg)"/><rect x="3.800" y="1.0" width="2.400" height="2.600" fill="#fff"/><rect x="28.600" y="1.0" width="2.400" height="2.600" fill="#fff"/><rect x="3.800" y="5.5" width="2.400" height="2.600" fill="#fff"/><rect x="28.600" y="5.5" width="2.400" height="2.600" fill="#fff"/><rect x="3.800" y="10.0" width="2.400" height="2.600" fill="#fff"/><rect x="28.600" y="10.0" width="2.400" height="2.600" fill="#fff"/><rect x="3.800" y="14.5" width="2.400" height="2.600" fill="#fff"/><rect x="28.600" y="14.5" width="2.400" height="2.600" fill="#fff"/><rect x="3.800" y="19.0" width="2.400" height="2.600" fill="#fff"/><rect x="28.600" y="19.0" width="2.400" height="2.600" fill="#fff"/><rect x="3.800" y="23.5" width="2.400" height="2.600" fill="#fff"/><rect x="28.600" y="23.5" width="2.400" height="2.600" fill="#fff"/><rect x="3.800" y="28.0" width="2.400" height="2.600" fill="#fff"/><rect x="28.600" y="28.0" width="2.400" height="2.600" fill="#fff"/><rect x="0" y="4.300" width="26.400" height="10.200" fill="#0a0a0a" stroke="#b8b8b8" stroke-width=".8"/><text x="2.400" y="12.200" font-family="Liberation Sans" font-weight="700" font-size="7.400" textLength="21.600" lengthAdjust="spacingAndGlyphs" fill="#fff">STUDIO</text></svg>
<svg style="left:1011px;top:733px" width="32" height="32" viewBox="0 0 32 32"><defs><radialGradient id="hb" cx=".5" cy=".95" r=".9"><stop offset="0" stop-color="#2a7ad8"/><stop offset=".45" stop-color="#0c2a78"/><stop offset="1" stop-color="#08184a"/></radialGradient></defs><circle cx="16" cy="16" r="15.500" fill="url(#hb)" stroke="#1a88d8" stroke-width="1"/><path d="M1.500 13A14.500 14.500 0 0 1 30.500 13Q16 8 1.500 13z" fill="#2a78d0" opacity=".32"/><text x="16" y="25.500" font-family="Liberation Sans" font-weight="700" font-size="27" text-anchor="middle" fill="#fff">?</text></svg>
<svg style="left:1057px;top:746px" width="9" height="6" viewBox="0 0 9 6"><path d="M0 5.500h9L4.500 .5z" fill="#fff"/></svg>
<svg style="left:1078px;top:741px" width="16" height="16" viewBox="0 0 16 16"><defs><radialGradient id="avt" cx=".4" cy=".3" r=".8"><stop offset="0" stop-color="#ffb040"/><stop offset="1" stop-color="#d84a00"/></radialGradient></defs><circle cx="8" cy="8" r="8" fill="url(#avt)"/><circle cx="7.600" cy="8.300" r="3.300" fill="none" stroke="#fff" stroke-width="2.200" stroke-dasharray="17.500 3.200" stroke-dashoffset="-6"/><path d="M11.400 5.300v6.400" stroke="#fff" stroke-width="2"/></svg>
<svg style="left:1102px;top:743px" width="16" height="12" viewBox="0 0 16 12"><rect x=".5" y=".5" width="15" height="11" fill="#f4f4f4" stroke="#cfcfcf" stroke-width="1"/><path d="M.5 .5L8 7l7.500-6.500M.5 11.500L6 5.500M15.500 11.500L10 5.500" fill="none" stroke="#aaa" stroke-width="1"/></svg>
<svg style="left:1126px;top:740px" width="17" height="17" viewBox="0 0 32 32"><path d="M1.500 3.500L29 .8v19.500L3.500 23z" fill="#f4f4f4" stroke="#d01c1c" stroke-width="2.400" stroke-linejoin="round"/><path d="M1.500 3.500L15 15 29 .8" fill="none" stroke="#d01c1c" stroke-width="3.600"/><path d="M9 29Q4 22 11 15q3-3.500 7-5 4 1 7 6 5 2 6 7-1 5-8 7.500-8 2-14-1.500z" fill="#f4d818" stroke="#a88a00" stroke-width=".8"/><path d="M12 16q4-4 8-3" fill="none" stroke="#fff8a0" stroke-width="1.500"/><g fill="#1a1208"><ellipse cx="14.500" cy="19.500" rx="2.400" ry="2.800"/><ellipse cx="21" cy="19" rx="2.200" ry="2.500"/><ellipse cx="25.500" cy="24" rx="2.600" ry="2.200"/><ellipse cx="20" cy="27" rx="3.600" ry="2.300"/><ellipse cx="12" cy="25.500" rx="1.800" ry="2.200"/></g><g fill="#6a5ab0" stroke="#e8e0ff" stroke-width=".5"><circle cx="14" cy="9" r="2"/><circle cx="7" cy="14" r="2"/><circle cx="3" cy="22" r="2"/><circle cx="30" cy="20" r="2"/></g></svg>
<svg style="left:1150px;top:741px" width="16" height="17" viewBox="0 0 16 17"><path d="M1.500 1v15.500" stroke="#fff" stroke-width="1.600"/><path d="M3.500 1.500Q6 .5 8.500 1.500T14 1.500L11.500 5 14 8Q11 9 8.500 8T3.500 8.500z" fill="#fff"/></svg>
<svg style="left:1174px;top:740px" width="17" height="17" viewBox="0 0 17 17"><path d="M1.500 1v3.500M5 1v3.500M.5 4.500h5.500v3Q6 9.500 4 9.500H2.500Q.5 9.500 .5 7.500zM3.200 9.500v7" stroke="#fff" stroke-width="1.400" fill="#fff"/><rect x="8.700" y="3" width="7" height="13" rx="1" fill="none" stroke="#fff" stroke-width="1.500"/><rect x="10.500" y="1" width="3.500" height="2" fill="#fff"/></svg>
<svg style="left:1198px;top:742px" width="16" height="14" viewBox="0 0 16 14"><g fill="#fff"><rect x="0" y="11.500" width="2" height="2"/><rect x="3.300" y="9.500" width="2.200" height="4"/><rect x="6.600" y="7" width="2.200" height="6.500"/><rect x="9.900" y="4" width="2.200" height="9.500"/><rect x="13.200" y=".5" width="2.300" height="13"/></g></svg>
<svg style="left:1222px;top:741px" width="16" height="16" viewBox="0 0 16 16"><path d="M.5 5.500h3L7.500 1.500v13L3.500 10.500h-3z" fill="none" stroke="#fff" stroke-width="1.100" stroke-linejoin="round"/><path d="M9.500 5.500Q11 8 9.500 10.500M11.500 3.500Q14.500 8 11.500 12.500" fill="none" stroke="#fff" stroke-width="1.100"/></svg>
<div class="t" style="left:1254.5px;top:742px;font-size:12px;color:#fff;letter-spacing:-1.729px;">CES</div>
<div class="t" style="left:1303.5px;top:735px;font-size:12px;color:#fff;letter-spacing:-0.706px;">18:43</div>
<div class="t" style="left:1286.5px;top:752px;font-size:12px;color:#fff;letter-spacing:-0.603px;">18. 10. 2013</div>
</body></html>
